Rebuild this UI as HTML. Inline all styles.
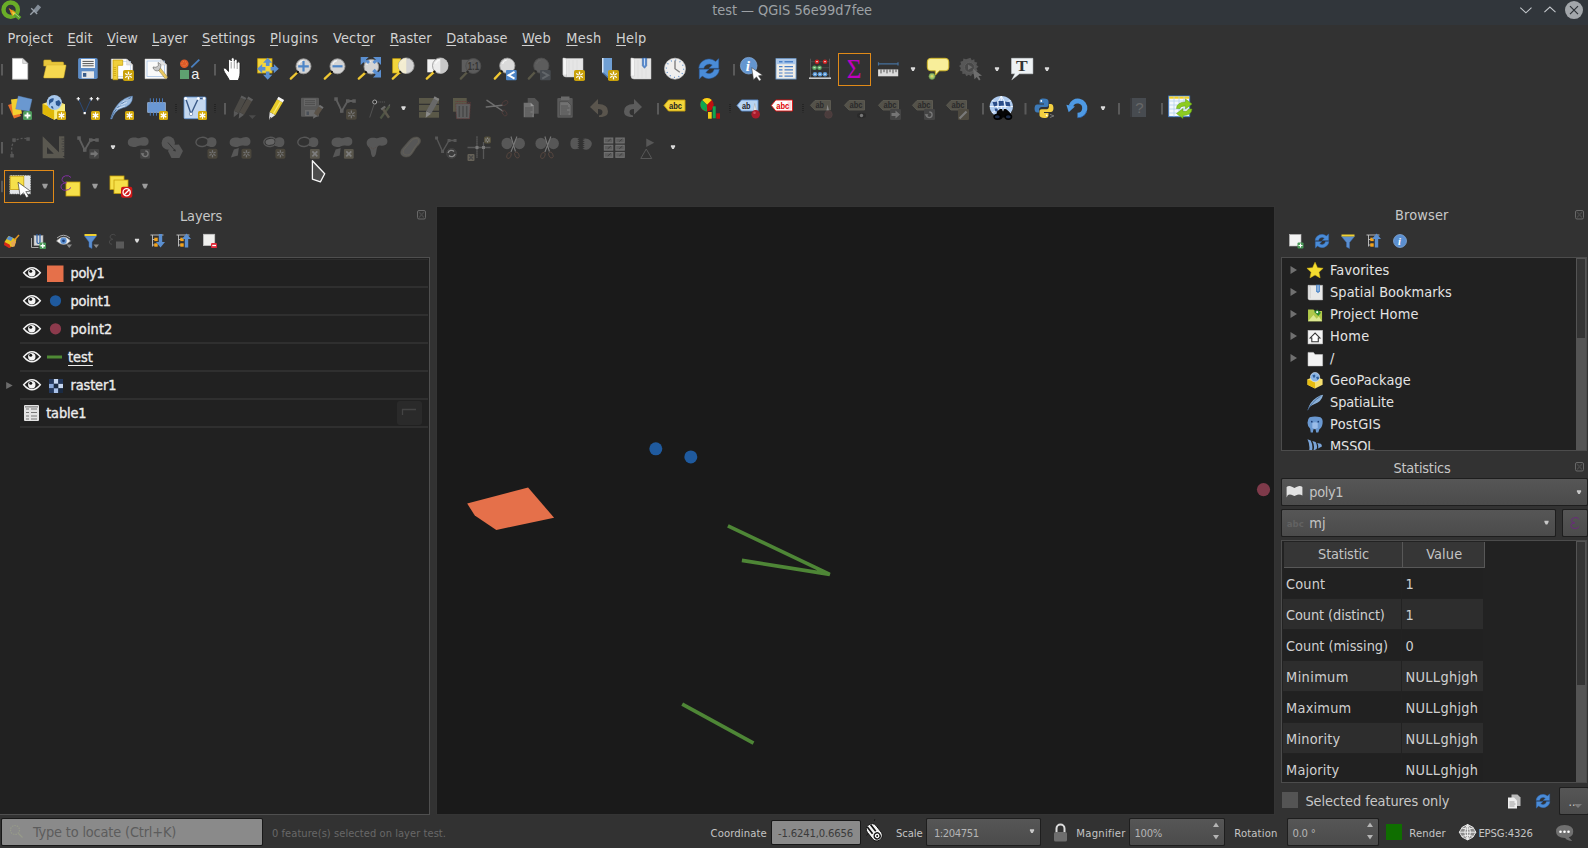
<!DOCTYPE html><html><head><meta charset="utf-8"><title>test — QGIS 56e99d7fee</title><style>
*{box-sizing:border-box;margin:0;padding:0}
html,body{width:1588px;height:848px;overflow:hidden;background:#323232}
body{position:relative;font-family:"DejaVu Sans Condensed","Liberation Sans","DejaVu Sans",sans-serif;font-size:14px;color:#d6d6d6}
.a{position:absolute}
.t{position:absolute;white-space:nowrap;line-height:1}
svg{position:absolute;overflow:visible}
u{text-decoration:underline;text-underline-offset:2px;text-decoration-thickness:1px}
</style></head><body>
<div class="a" style="left:0px;top:0px;width:1588px;height:25px;background:#31363b;"></div>
<div class="t" style="left:712.2px;top:2.72px;font-size:14.4px;color:#9da1a5;letter-spacing:-0.017px;">test — QGIS 56e99d7fee</div>
<div class="t" style="left:7.6px;top:30.72px;font-size:14.4px;color:#d2d2d2;letter-spacing:0.148px;">Pro<u>j</u>ect</div>
<div class="t" style="left:67.4px;top:30.72px;font-size:14.4px;color:#d2d2d2;letter-spacing:0.028px;"><u>E</u>dit</div>
<div class="t" style="left:107px;top:30.72px;font-size:14.4px;color:#d2d2d2;letter-spacing:0.047px;"><u>V</u>iew</div>
<div class="t" style="left:152px;top:30.72px;font-size:14.4px;color:#d2d2d2;letter-spacing:-0.083px;"><u>L</u>ayer</div>
<div class="t" style="left:202px;top:30.72px;font-size:14.4px;color:#d2d2d2;letter-spacing:0.032px;"><u>S</u>ettings</div>
<div class="t" style="left:270px;top:30.72px;font-size:14.4px;color:#d2d2d2;letter-spacing:0.284px;"><u>P</u>lugins</div>
<div class="t" style="left:333px;top:30.72px;font-size:14.4px;color:#d2d2d2;letter-spacing:0.190px;">Vect<u>o</u>r</div>
<div class="t" style="left:389.9px;top:30.72px;font-size:14.4px;color:#d2d2d2;letter-spacing:0.009px;"><u>R</u>aster</div>
<div class="t" style="left:446.3px;top:30.72px;font-size:14.4px;color:#d2d2d2;letter-spacing:-0.102px;"><u>D</u>atabase</div>
<div class="t" style="left:521.9px;top:30.72px;font-size:14.4px;color:#d2d2d2;letter-spacing:0.344px;"><u>W</u>eb</div>
<div class="t" style="left:566.2px;top:30.72px;font-size:14.4px;color:#d2d2d2;letter-spacing:0.296px;"><u>M</u>esh</div>
<div class="t" style="left:616.1px;top:30.72px;font-size:14.4px;color:#d2d2d2;letter-spacing:0.163px;"><u>H</u>elp</div>
<div class="a" style="left:838px;top:53px;width:33px;height:33px;background:transparent;border:1.300px solid #e08a18"></div>
<div class="a" style="left:4px;top:170px;width:50px;height:33px;background:transparent;border:1.300px solid #e08a18"></div>
<div class="a" style="left:436px;top:206px;width:839px;height:609px;background:#343434;"></div>
<div class="a" style="left:437px;top:207px;width:837px;height:607px;background:#1a1a1a;"></div>
<div class="t" style="left:180px;top:209.02px;font-size:14.4px;color:#c8c8c8;letter-spacing:-0.127px;">Layers</div>
<div class="a" style="left:0px;top:257px;width:430px;height:558px;background:#4f4f4f;"></div>
<div class="a" style="left:0px;top:258px;width:429px;height:556px;background:#212121;"></div>
<div class="a" style="left:20px;top:259px;width:408px;height:1px;background:#2c2c2c;"></div>
<div class="a" style="left:20px;top:286px;width:408px;height:2px;background:#2f2f2f;"></div>
<div class="a" style="left:20px;top:314px;width:408px;height:2px;background:#2f2f2f;"></div>
<div class="a" style="left:20px;top:342px;width:408px;height:2px;background:#2f2f2f;"></div>
<div class="a" style="left:20px;top:370px;width:408px;height:2px;background:#2f2f2f;"></div>
<div class="a" style="left:20px;top:398px;width:408px;height:2px;background:#2f2f2f;"></div>
<div class="a" style="left:20px;top:426px;width:408px;height:2px;background:#2f2f2f;"></div>
<div class="t" style="left:70.5px;top:265.82px;font-size:14.4px;color:#ececec;letter-spacing:-0.331px;font-weight:normal;-webkit-text-stroke:0.35px #ececec">poly1</div>
<div class="t" style="left:70.5px;top:293.82px;font-size:14.4px;color:#ececec;letter-spacing:-0.164px;font-weight:normal;-webkit-text-stroke:0.35px #ececec">point1</div>
<div class="t" style="left:70.5px;top:321.82px;font-size:14.4px;color:#ececec;letter-spacing:0.120px;font-weight:normal;-webkit-text-stroke:0.35px #ececec">point2</div>
<div class="t" style="left:68px;top:349.82px;font-size:14.4px;color:#ececec;letter-spacing:0.005px;font-weight:normal;-webkit-text-stroke:0.35px #ececec"><u style="text-underline-offset:2.500px">test</u></div>
<div class="t" style="left:70.5px;top:377.82px;font-size:14.4px;color:#ececec;letter-spacing:-0.118px;font-weight:normal;-webkit-text-stroke:0.35px #ececec">raster1</div>
<div class="t" style="left:46.2px;top:405.82px;font-size:14.4px;color:#ececec;letter-spacing:-0.143px;font-weight:normal;-webkit-text-stroke:0.35px #ececec">table1</div>
<div class="a" style="left:397px;top:401px;width:25px;height:24px;background:#2a2a2a;border-radius:3px"></div>
<div class="t" style="left:1395.1px;top:208.32px;font-size:14.4px;color:#c8c8c8;letter-spacing:0.148px;">Browser</div>
<div class="a" style="left:1281px;top:257px;width:306px;height:194px;background:#4c4c4c;"></div>
<div class="a" style="left:1282px;top:258px;width:304px;height:192px;background:#212121;"></div>
<div class="a" style="left:1576px;top:258px;width:10px;height:192px;background:#545454;"></div>
<div class="a" style="left:1577px;top:259px;width:8px;height:79px;background:#343434;"></div>
<div class="a" style="left:1282px;top:258px;width:294px;height:192px;overflow:hidden">
<div class="t" style="left:48.100px;top:5.12px;font-size:14.400px;color:#e4e4e4;letter-spacing:0.113px;">Favorites</div>
<div class="t" style="left:48.100px;top:27.12px;font-size:14.400px;color:#e4e4e4;letter-spacing:0.047px;">Spatial Bookmarks</div>
<div class="t" style="left:48.100px;top:49.12px;font-size:14.400px;color:#e4e4e4;letter-spacing:0.155px;">Project Home</div>
<div class="t" style="left:48.100px;top:71.12px;font-size:14.400px;color:#e4e4e4;letter-spacing:0.259px;">Home</div>
<div class="t" style="left:48.100px;top:93.12px;font-size:14.400px;color:#e4e4e4;">/</div>
<div class="t" style="left:48.100px;top:115.12px;font-size:14.400px;color:#e4e4e4;letter-spacing:0.135px;">GeoPackage</div>
<div class="t" style="left:48.100px;top:137.12px;font-size:14.400px;color:#e4e4e4;letter-spacing:-0.117px;">SpatiaLite</div>
<div class="t" style="left:48.100px;top:159.12px;font-size:14.400px;color:#e4e4e4;letter-spacing:0.252px;">PostGIS</div>
<div class="t" style="left:48.100px;top:181.12px;font-size:14.400px;color:#e4e4e4;letter-spacing:-0.149px;">MSSQL</div>
<svg style="left:0;top:0" width="294" height="192"><g transform="translate(24.400,3.6999999999999993) scale(1.080)"><path d="M8 .5l2.300 5 5.200.6-3.900 3.600 1.100 5.300-4.700-2.700-4.700 2.700 1.100-5.300-3.900-3.600 5.200-.6z" fill="#f4dc30" stroke="#d8b810" stroke-width="0.500"/></g><path d="M8.500 8l6.500 4-6.500 4z" fill="#707070"/><g transform="translate(24.400,25.7) scale(1.080)"><path d="M1.500 1.500h13.500v13.500h-12q-1.500 0-1.500-1.500z" fill="#e8e8e8" stroke="#bbb" stroke-width="0.500"/><path d="M1.500 1.500q2 0 2 2v10" fill="none" stroke="#c4c4c4" stroke-width="0.700"/><path d="M9 1h3.500v6l-1.750 1.800-1.750-1.800z" fill="#4e86c8"/><path d="M10.750 1.500v5.500" stroke="#fff" stroke-width="0.600"/></g><path d="M8.500 30l6.500 4-6.500 4z" fill="#707070"/><g transform="translate(24.400,47.7) scale(1.080)"><path d="M1.500 3.500h5l1.500 1.500h6.500v9.500h-13z" fill="#b0c84a"/><path d="M1.500 14.500l5-6 3 3.500 2-2 3 4.500z" fill="#dce890"/><path d="M7 5.500l3-2 3.500 3-2.500 3z" fill="#2a8a30"/><circle cx="10" cy="6" r="1" fill="#fff"/></g><path d="M8.500 52l6.500 4-6.500 4z" fill="#707070"/><g transform="translate(24.400,69.7) scale(1.080)"><rect x="1.500" y="2.500" width="13.500" height="12.500" fill="#f2f2f2" stroke="#ccc" stroke-width="0.500"/><path d="M8 5l-4.500 4.500h1.500v3.500h6v-3.500h1.500z" fill="#fff" stroke="#333" stroke-width="1"/></g><path d="M8.500 74l6.500 4-6.500 4z" fill="#707070"/><g transform="translate(24.400,91.7) scale(1.080)"><path d="M1.500 2.500h5l1.500 2h7v10.500h-13.500z" fill="#f2f2f2" stroke="#ccc" stroke-width="0.500"/></g><path d="M8.500 96l6.500 4-6.500 4z" fill="#707070"/><g transform="translate(24.400,113.7) scale(1.080)"><path d="M1 7l7-2.500 7 2.500v5l-7 3.500-7-3.500z" fill="#f6e070"/><path d="M1 7l7 3v5.500l-7-3.500z" fill="#e6bc10"/><circle cx="8" cy="5" r="4.300" fill="#8ab4e4"/><path d="M5.500 3.500l2-1 1 1.500-1.500 2zM9 5l2-.5 1 2-2 1z" fill="#2f5f9a"/><circle cx="8" cy="5" r="4.300" fill="none" stroke="#e8f0fc" stroke-width="0.500"/></g><g transform="translate(24.400,135.7) scale(1.080)"><path d="M1 15.500q2-8 8.500-12 3.500-2.200 6-2.500-.8 3.500-3 5.800-1.500 1.600-4.800 2.700-2.600.8-4.700 2.700z" fill="#8ab0d8"/><path d="M1.200 15.300q3.500-7.500 12-13" fill="none" stroke="#3a5f90" stroke-width="0.700"/></g><g transform="translate(24.400,157.7) scale(1.080)"><path d="M3 1.500q5-1.500 10 0 2.500 1.500 2 5.500t-3 5.500l-1 3h-2l-.5-3h-2l-.5 3h-2l-.5-3.500q-2.500-2-2.500-5.500t2-5z" fill="#6a98d0"/><path d="M5.500 6.500q2.500-1 5 0v5q-2.500 1.500-5 0z" fill="#9abce8"/><circle cx="5" cy="5.500" r=".8" fill="#1c3c74"/><circle cx="11" cy="5.500" r=".8" fill="#1c3c74"/></g><g transform="translate(24.400,179.7) scale(1.080)"><path d="M1 1.500q3 6 1 13l3-2q1.500-5-1-10zM5.500 3q2.500 4.500 1 9l3-1.500q1-3.500-1-6.500zM10 5q1.500 2.500.8 5l3.500-1.800q.2-1.500-1-2.500z" fill="#7aa4d8"/></g></svg>
</div>
<div class="t" style="left:1393.5px;top:460.62px;font-size:14.4px;color:#c8c8c8;letter-spacing:-0.212px;">Statistics</div>
<div class="a" style="left:1281px;top:478px;width:307px;height:28px;background:#1e1e1e;border-radius:1.500px"></div>
<div class="a" style="left:1282px;top:479px;width:305px;height:26px;background:linear-gradient(#565656,#4b4b4b);border-radius:1px"></div>
<div class="t" style="left:1309.3px;top:484.92px;font-size:14.4px;color:#c4c4c4;letter-spacing:-0.331px;">poly1</div>
<div class="a" style="left:1281px;top:509px;width:275px;height:28px;background:#1e1e1e;border-radius:1.500px"></div>
<div class="a" style="left:1282px;top:510px;width:273px;height:26px;background:linear-gradient(#565656,#4b4b4b);border-radius:1px"></div>
<div class="t" style="left:1286.8px;top:518.56px;font-size:9.5px;color:#626262;font-weight:bold">abc</div>
<div class="t" style="left:1309.3px;top:515.62px;font-size:14.4px;color:#c4c4c4;letter-spacing:-0.011px;">mj</div>
<div class="a" style="left:1562px;top:509px;width:26px;height:28px;background:#1e1e1e;border-radius:1.500px"></div>
<div class="a" style="left:1563px;top:510px;width:24px;height:26px;background:linear-gradient(#565656,#4b4b4b);border-radius:1px"></div>
<div class="a" style="left:1281px;top:540px;width:306px;height:243px;background:#4c4c4c;"></div>
<div class="a" style="left:1282px;top:541px;width:304px;height:241px;background:#222222;"></div>
<div class="a" style="left:1284px;top:542px;width:200px;height:25px;background:#363636;"></div>
<div class="a" style="left:1402px;top:542px;width:1px;height:25px;background:#585858;"></div>
<div class="a" style="left:1284px;top:567px;width:200px;height:1px;background:#585858;"></div>
<div class="a" style="left:1484px;top:542px;width:1px;height:26px;background:#585858;"></div>
<div class="t" style="left:1318.1px;top:546.82px;font-size:14.4px;color:#c4c4c4;letter-spacing:-0.174px;">Statistic</div>
<div class="t" style="left:1426.2px;top:546.82px;font-size:14.4px;color:#c4c4c4;letter-spacing:0.127px;">Value</div>
<div class="a" style="left:1282px;top:568px;width:294px;height:214px;overflow:hidden">
<div class="a" style="left:1px;top:0px;width:118px;height:30px;background:#212121"></div>
<div class="a" style="left:120px;top:0px;width:81px;height:30px;background:#212121"></div>
<div class="t" style="left:4.100px;top:8.62px;font-size:14.400px;color:#d0d0d0;letter-spacing:0.125px;">Count</div>
<div class="t" style="left:123.600px;top:8.62px;font-size:14.400px;color:#d0d0d0;">1</div>
<div class="a" style="left:1px;top:31px;width:118px;height:30px;background:#2d2d2d"></div>
<div class="a" style="left:120px;top:31px;width:81px;height:30px;background:#2d2d2d"></div>
<div class="t" style="left:4.100px;top:39.62px;font-size:14.400px;color:#d0d0d0;letter-spacing:-0.098px;">Count (distinct)</div>
<div class="t" style="left:123.600px;top:39.62px;font-size:14.400px;color:#d0d0d0;">1</div>
<div class="a" style="left:1px;top:62px;width:118px;height:30px;background:#212121"></div>
<div class="a" style="left:120px;top:62px;width:81px;height:30px;background:#212121"></div>
<div class="t" style="left:4.100px;top:70.62px;font-size:14.400px;color:#d0d0d0;letter-spacing:-0.031px;">Count (missing)</div>
<div class="t" style="left:123.600px;top:70.62px;font-size:14.400px;color:#d0d0d0;">0</div>
<div class="a" style="left:1px;top:93px;width:118px;height:30px;background:#2d2d2d"></div>
<div class="a" style="left:120px;top:93px;width:81px;height:30px;background:#2d2d2d"></div>
<div class="t" style="left:4.100px;top:101.62px;font-size:14.400px;color:#d0d0d0;letter-spacing:0.365px;">Minimum</div>
<div class="t" style="left:123.600px;top:101.62px;font-size:14.400px;color:#d0d0d0;letter-spacing:0.302px;">NULLghjgh</div>
<div class="a" style="left:1px;top:124px;width:118px;height:30px;background:#212121"></div>
<div class="a" style="left:120px;top:124px;width:81px;height:30px;background:#212121"></div>
<div class="t" style="left:4.100px;top:132.62px;font-size:14.400px;color:#d0d0d0;letter-spacing:0.223px;">Maximum</div>
<div class="t" style="left:123.600px;top:132.62px;font-size:14.400px;color:#d0d0d0;letter-spacing:0.302px;">NULLghjgh</div>
<div class="a" style="left:1px;top:155px;width:118px;height:30px;background:#2d2d2d"></div>
<div class="a" style="left:120px;top:155px;width:81px;height:30px;background:#2d2d2d"></div>
<div class="t" style="left:4.100px;top:163.62px;font-size:14.400px;color:#d0d0d0;letter-spacing:0.215px;">Minority</div>
<div class="t" style="left:123.600px;top:163.62px;font-size:14.400px;color:#d0d0d0;letter-spacing:0.302px;">NULLghjgh</div>
<div class="a" style="left:1px;top:186px;width:118px;height:30px;background:#212121"></div>
<div class="a" style="left:120px;top:186px;width:81px;height:30px;background:#212121"></div>
<div class="t" style="left:4.100px;top:194.62px;font-size:14.400px;color:#d0d0d0;letter-spacing:0.124px;">Majority</div>
<div class="t" style="left:123.600px;top:194.62px;font-size:14.400px;color:#d0d0d0;letter-spacing:0.302px;">NULLghjgh</div>
</div>
<div class="a" style="left:1576px;top:541px;width:10px;height:241px;background:#545454;"></div>
<div class="a" style="left:1577px;top:542px;width:8px;height:143px;background:#343434;"></div>
<div class="a" style="left:1282px;top:792px;width:16px;height:16px;background:#545454;"></div>
<div class="t" style="left:1305.4px;top:794.12px;font-size:14.4px;color:#c8c8c8;letter-spacing:-0.054px;">Selected features only</div>
<div class="a" style="left:1559px;top:787px;width:30px;height:28px;background:#1e1e1e;border-radius:1.500px"></div>
<div class="a" style="left:1560px;top:788px;width:28px;height:26px;background:linear-gradient(#565656,#4b4b4b);border-radius:1px"></div>
<div class="t" style="left:1568.5px;top:795.85px;font-size:12px;color:#c8c8c8;">...</div>
<div class="a" style="left:1px;top:818px;width:262px;height:28px;background:#181818;border-radius:2px"></div>
<div class="a" style="left:2px;top:819px;width:260px;height:26px;background:#8a8a8a;border-radius:1px"></div>
<div class="t" style="left:33px;top:824.82px;font-size:14.4px;color:#5c5c5c;letter-spacing:-0.162px;">Type to locate (Ctrl+K)</div>
<div class="t" style="left:272px;top:828.09px;font-size:11px;color:#686868;letter-spacing:0.065px;">0 feature(s) selected on layer test.</div>
<div class="t" style="left:710.6px;top:827.92px;font-size:11.2px;color:#c4c4c4;letter-spacing:0.118px;">Coordinate</div>
<div class="a" style="left:771px;top:820px;width:90px;height:25px;background:#181818;border-radius:2px"></div>
<div class="a" style="left:772px;top:821px;width:88px;height:23px;background:#8a8a8a;border-radius:1px"></div>
<div class="t" style="left:778.1px;top:827.92px;font-size:11.2px;color:#3a3a3a;letter-spacing:-0.166px;">-1.6241,0.6656</div>
<div class="t" style="left:896px;top:827.92px;font-size:11.2px;color:#c4c4c4;letter-spacing:-0.123px;">Scale</div>
<div class="a" style="left:926px;top:818px;width:115px;height:28px;background:#1e1e1e;border-radius:1.500px"></div>
<div class="a" style="left:927px;top:819px;width:113px;height:26px;background:linear-gradient(#565656,#4b4b4b);border-radius:1px"></div>
<div class="t" style="left:933.9px;top:827.92px;font-size:11.2px;color:#b4b4b4;letter-spacing:-0.433px;">1:204751</div>
<div class="t" style="left:1076.3px;top:827.92px;font-size:11.2px;color:#c4c4c4;letter-spacing:0.250px;">Magnifier</div>
<div class="a" style="left:1129px;top:818px;width:96px;height:28px;background:#1e1e1e;border-radius:1.500px"></div>
<div class="a" style="left:1130px;top:819px;width:94px;height:26px;background:linear-gradient(#565656,#4b4b4b);border-radius:1px"></div>
<div class="t" style="left:1134.5px;top:827.92px;font-size:11.2px;color:#b4b4b4;letter-spacing:-0.326px;">100%</div>
<div class="t" style="left:1234.3px;top:827.92px;font-size:11.2px;color:#c4c4c4;letter-spacing:0.140px;">Rotation</div>
<div class="a" style="left:1287px;top:818px;width:92px;height:28px;background:#1e1e1e;border-radius:1.500px"></div>
<div class="a" style="left:1288px;top:819px;width:90px;height:26px;background:linear-gradient(#565656,#4b4b4b);border-radius:1px"></div>
<div class="t" style="left:1292.5px;top:827.92px;font-size:11.2px;color:#b4b4b4;letter-spacing:-0.251px;">0.0 °</div>
<div class="a" style="left:1386px;top:824px;width:16px;height:16px;background:#0f6e00;"></div>
<div class="t" style="left:1409.3px;top:827.92px;font-size:11.2px;color:#c4c4c4;letter-spacing:0.112px;">Render</div>
<div class="t" style="left:1478.4px;top:827.92px;font-size:11.2px;color:#c4c4c4;letter-spacing:-0.154px;">EPSG:4326</div>
<svg style="left:0;top:0" width="1588" height="848"><rect x="1" y="64.0" width="2" height="11.500" fill="#5a5a5a"/>
<g transform="translate(8.0,56)"><path d="M4.5 2.4h10.200l5 5v15.800h-15.200z" fill="#fff" stroke="#c8c8c8" stroke-width="0.8"/><path d="M14.700 2.400v5h5z" fill="#e0e0e0" stroke="#aaa" stroke-width="0.6"/></g>
<g transform="translate(42.0,56)"><path d="M1.700 5q0-1.100 1.100-1.100h5.500q.8 0 1 1l.3 1.100h11q1.100 0 1.100 1.100v3h-20z" fill="#e8c63c" stroke="#c9a520" stroke-width="0.500"/><path d="M5.300 9h18.200q.7 0 .5.800l-2.200 11.500q-.2.700-1 .7h-18.300q-1 0-.8-.9l2.600-11.300q.2-.8 1-.8z" fill="#f6d84f" stroke="#d4b02c" stroke-width="0.500"/></g>
<g transform="translate(76.0,56)"><rect x="2.100" y="2" width="19.600" height="21" rx="1.8" fill="#5d8cc6"/><rect x="5" y="3" width="14" height="9" fill="#f4f4f4"/><path d="M6.5 5.4h11.2M6.5 7.6h11.2M6.5 9.8h11.2" stroke="#555" stroke-width="1"/><rect x="5.700" y="15.300" width="12.300" height="7" fill="#e6e6e6"/><rect x="7" y="17" width="3.300" height="3.800" fill="#3b5d8a"/></g>
<g transform="translate(110.0,56)"><path d="M1.300 3h15.400l6 6v13.700h-21.400z" fill="#fdfdfd" stroke="#ccc" stroke-width="0.500"/><rect x="3.500" y="5.500" width="17" height="15" fill="none" stroke="#b8d0ec" stroke-width="0.700"/><path d="M16.700 3v6h6z" fill="#e4e4e4" stroke="#bbb" stroke-width="0.400"/><path d="M3 4h9.700v5.300h-5v14.400h-4.700z" fill="#f0cf3a" stroke="#c8a10a" stroke-width="0.800"/><path d="M3.500 11.500h2.500M3.500 13.500h2.500M3.500 15.500h2.500M3.500 17.500h2.500M3.500 19.500h2.500" stroke="#c8a10a" stroke-width="0.700"/><g opacity="1"><rect x="13" y="14" width="11" height="11" rx="1.8" fill="#c9a10a"/><line x1="15.07" y1="17.52" x2="21.93" y2="21.48" stroke="#fff" stroke-width="1.1"/><line x1="21.93" y1="17.52" x2="15.07" y2="21.48" stroke="#fff" stroke-width="1.1"/><line x1="18.5" y1="15.54" x2="18.5" y2="23.46" stroke="#fff" stroke-width="1.3"/><circle cx="18.5" cy="19.5" r="1.1" fill="#c9a10a"/></g></g>
<g transform="translate(144.0,56)"><path d="M1 3h15.700l6 6v13.700h-21.700z" fill="#fafafa" stroke="#ccc" stroke-width="0.500"/><rect x="3" y="5" width="17.500" height="15.500" fill="none" stroke="#a8c4e6" stroke-width="0.800"/><path d="M16.700 3v6h6z" fill="#e4e4e4" stroke="#bbb" stroke-width="0.400"/><path d="M13.500 13l8 10 2.200-1.700-8-10.300z" fill="#e8c860" stroke="#8a7a4a" stroke-width="0.500"/><path d="M9 11a4 4 0 0 0 6.200 3.300l1.400-2.900a4 4 0 0 0-2.600-4.900l.5 3-2.500 1.800z" fill="#c8c8c8" stroke="#666" stroke-width="0.600"/></g>
<g transform="translate(178.0,56)"><circle cx="6.300" cy="7.700" r="4.300" fill="#dc5a2a"/><circle cx="6.300" cy="7.700" r="2.200" fill="none" stroke="#f08a40" stroke-width="0.900" stroke-dasharray="1 1"/><line x1="13.300" y1="11.300" x2="21.300" y2="3.700" stroke="#4a80c0" stroke-width="1.800"/><rect x="2" y="14" width="9" height="9" fill="#5ea070"/><text x="13.200" y="22.700" font-size="14.500" fill="#f0f0f0" font-family="Liberation Sans, sans-serif">a</text></g>
<rect x="214" y="64.0" width="2" height="11.500" fill="#5a5a5a"/>
<g transform="translate(221.0,56)"><path d="M8.500 24.500c-1.500-3.500-5-7.500-6-10.500-.6-1.800 1.400-2.600 2.600-1.300l2.400 2.800v-10.500c0-2 2.600-2 2.700 0v-1.600c.1-2.200 3-2.200 3.100 0v1.400c.2-2 2.800-1.900 2.900.1v2.200c.3-1.800 2.800-1.600 2.800.4v9.500c0 3.500-1.200 5-1.700 7.500z" fill="#fff" stroke="#1a1a1a" stroke-width="0.800"/><path d="M10.200 6v6.500M13.300 5v7.500M16.200 6v7" stroke="#777" stroke-width="0.700"/></g>
<g transform="translate(255.0,56)"><rect x="2.700" y="2.700" width="14.300" height="14.300" fill="#f3d53c" stroke="#c9a10a" stroke-width="0.8"/><path d="M12.700 1.800l4.600 5h-2.800v3.200h-3.600v-3.200h-2.800z" fill="#5b8fd0"/><path d="M12.700 23.800l4.600-5h-2.800v-3.200h-3.600v3.200h-2.800z" fill="#5b8fd0"/><path d="M23.800 12.700l-5-4.600v2.800h-3.200v3.600h3.200v2.800z" fill="#5b8fd0"/><path d="M2.200 12.700l5-4.600v2.800h3.200v3.600h-3.200v2.800z" fill="#5b8fd0"/></g>
<g transform="translate(289.0,56)"><line x1="8.77" y1="16.03" x2="1.800" y2="22.600" stroke="#f0c832" stroke-width="2.300" stroke-linecap="round"/><circle cx="14.5" cy="10.3" r="7.5" fill="#d4d4d4" stroke="#9a9a9a" stroke-width="0.900"/><path d="M9.85 8.43a5.25 5.25 0 0 1 4.12 -3.75" fill="none" stroke="#fff" stroke-width="1.200" opacity="0.700"/><circle cx="8.77" cy="16.03" r="1.250" fill="#111"/><path d="M14.500 5v10.600M9.200 10.300h10.600" stroke="#4e86c8" stroke-width="2.200"/></g>
<g transform="translate(323.0,56)"><line x1="8.77" y1="16.03" x2="1.800" y2="22.600" stroke="#f0c832" stroke-width="2.300" stroke-linecap="round"/><circle cx="14.5" cy="10.3" r="7.5" fill="#d4d4d4" stroke="#9a9a9a" stroke-width="0.900"/><path d="M9.85 8.43a5.25 5.25 0 0 1 4.12 -3.75" fill="none" stroke="#fff" stroke-width="1.200" opacity="0.700"/><circle cx="8.77" cy="16.03" r="1.250" fill="#111"/><path d="M9.500 10.300h10" stroke="#4e86c8" stroke-width="2.200"/></g>
<g transform="translate(357.0,56)"><path d="M3.700 1h8l-2.700 2.700 3.500 3.500-2.500 2.500-3.500-3.500-2.800 2.800z" fill="#5b8fd0"/><path d="M24 1v8l-2.700-2.700-3.500 3.500-2.500-2.500 3.500-3.500-2.800-2.800z" fill="#5b8fd0"/><line x1="8.71" y1="16.29" x2="1.800" y2="22.600" stroke="#f0c832" stroke-width="2.300" stroke-linecap="round"/><circle cx="14.3" cy="10.7" r="7.3" fill="#d4d4d4" stroke="#9a9a9a" stroke-width="0.900"/><path d="M9.77 8.88a5.11 5.11 0 0 1 4.02 -3.65" fill="none" stroke="#fff" stroke-width="1.200" opacity="0.700"/><circle cx="8.71" cy="16.29" r="1.250" fill="#111"/><path d="M24 21.500h-8l2.700-2.700-3.500-3.500 2.500-2.500 3.500 3.500 2.800-2.800z" fill="#5b8fd0"/><path d="M9.500 4.500l2.500 2.500M19 4.500l-2.500 2.500" stroke="#5b8fd0" stroke-width="3"/></g>
<g transform="translate(391.0,56)"><rect x="1.700" y="2.700" width="8" height="14.300" fill="#f3d53c" stroke="#c9a10a" stroke-width="0.700"/><line x1="9.36" y1="15.64" x2="1.800" y2="22.600" stroke="#f0c832" stroke-width="2.300" stroke-linecap="round"/><circle cx="15.3" cy="9.7" r="7.8" fill="#d4d4d4" stroke="#9a9a9a" stroke-width="0.900"/><path d="M10.46 7.75a5.46 5.46 0 0 1 4.29 -3.90" fill="none" stroke="#fff" stroke-width="1.200" opacity="0.700"/><circle cx="9.36" cy="15.64" r="1.250" fill="#111"/><path d="M15.300 1.900a7.800 7.800 0 0 0 0 15.600z" fill="#f6efd0" opacity="0.900"/></g>
<g transform="translate(425.0,56)"><rect x="2.300" y="3.300" width="8" height="13" fill="#f2f2f2"/><line x1="9.36" y1="15.64" x2="1.800" y2="22.600" stroke="#f0c832" stroke-width="2.300" stroke-linecap="round"/><circle cx="15.3" cy="9.7" r="7.8" fill="#ececec" stroke="#9a9a9a" stroke-width="0.900"/><path d="M10.46 7.75a5.46 5.46 0 0 1 4.29 -3.90" fill="none" stroke="#fff" stroke-width="1.200" opacity="0.700"/><circle cx="9.36" cy="15.64" r="1.250" fill="#111"/><path d="M15.300 1.900a7.800 7.800 0 0 1 0 15.600z" fill="#c8c8c8"/></g>
<g transform="translate(459.0,56)"><rect x="2.700" y="3.700" width="8" height="12.300" fill="#5e5e5e"/><line x1="8.57" y1="15.73" x2="1.800" y2="22.600" stroke="#5a5848" stroke-width="2.300" stroke-linecap="round"/><circle cx="14.3" cy="10" r="7.5" fill="#5c5c5c" stroke="#4e4e4e" stroke-width="0.900"/><path d="M9.65 8.12a5.25 5.25 0 0 1 4.12 -3.75" fill="none" stroke="#666" stroke-width="1.200" opacity="0.700"/><circle cx="8.57" cy="15.73" r="1.250" fill="#2a2a2a"/><text x="8.800" y="13.800" font-size="11" font-weight="bold" fill="#333" font-family="Liberation Sans, sans-serif" textLength="11.200" lengthAdjust="spacingAndGlyphs">1:1</text></g>
<g transform="translate(493.0,56)"><line x1="8.50" y1="15.50" x2="1.800" y2="22.600" stroke="#f0c832" stroke-width="2.300" stroke-linecap="round"/><circle cx="14.3" cy="9.7" r="7.6" fill="#dadada" stroke="#9a9a9a" stroke-width="0.900"/><path d="M9.59 7.80a5.32 5.32 0 0 1 4.18 -3.80" fill="none" stroke="#fff" stroke-width="1.200" opacity="0.700"/><circle cx="8.50" cy="15.50" r="1.250" fill="#111"/><rect x="13" y="14" width="10.700" height="10.300" rx="1" fill="#4e86c8"/><path d="M21.500 15.800l-6 3.400 6 3.400" fill="none" stroke="#fff" stroke-width="1.900"/></g>
<g transform="translate(527.0,56)"><line x1="8.50" y1="15.50" x2="1.800" y2="22.600" stroke="#5a5848" stroke-width="2.300" stroke-linecap="round"/><circle cx="14.3" cy="9.7" r="7.6" fill="#5c5c5c" stroke="#4e4e4e" stroke-width="0.900"/><path d="M9.59 7.80a5.32 5.32 0 0 1 4.18 -3.80" fill="none" stroke="#666" stroke-width="1.200" opacity="0.700"/><circle cx="8.50" cy="15.50" r="1.250" fill="#2a2a2a"/><rect x="13" y="14" width="10.700" height="10.300" rx="1" fill="#474b50"/><path d="M15.200 15.800l6 3.400-6 3.400" fill="none" stroke="#62666a" stroke-width="1.900"/></g>
<g transform="translate(561.0,56)"><path d="M2 2.500h20v18.500h-17q-3 0-3-3z" fill="#e6e6e6" stroke="#c4c4c4" stroke-width="0.500"/><path d="M2 2q3.500-.5 3.500 2.500v14.500h-3.500z" fill="#f6f6f6" stroke="#c8c8c8" stroke-width="0.500"/><path d="M5.500 18.500v2.500" stroke="#c0c0c0" stroke-width="0.700"/><path d="M8 4v16M12 4v16M16 4v10" stroke="#dcdcdc" stroke-width="0.800"/><g opacity="1"><rect x="13" y="14" width="11" height="11" rx="1.8" fill="#c9a10a"/><line x1="15.07" y1="17.52" x2="21.93" y2="21.48" stroke="#fff" stroke-width="1.1"/><line x1="21.93" y1="17.52" x2="15.07" y2="21.48" stroke="#fff" stroke-width="1.1"/><line x1="18.5" y1="15.54" x2="18.5" y2="23.46" stroke="#fff" stroke-width="1.3"/><circle cx="18.5" cy="19.5" r="1.1" fill="#c9a10a"/></g></g>
<g transform="translate(595.0,56)"><path d="M7 2h10v20l-3.500 .7-6.500-6.200z" fill="#6f9fd4"/><path d="M7 2h1.500v15.500l-1.500-1z" fill="#d8e6f6"/><path d="M7 16.500l6.500 6.200v-1.500l-5-4.700z" fill="#3f6aa0"/><g opacity="1"><rect x="13" y="14" width="11" height="11" rx="1.8" fill="#c9a10a"/><line x1="15.07" y1="17.52" x2="21.93" y2="21.48" stroke="#fff" stroke-width="1.1"/><line x1="21.93" y1="17.52" x2="15.07" y2="21.48" stroke="#fff" stroke-width="1.1"/><line x1="18.5" y1="15.54" x2="18.5" y2="23.46" stroke="#fff" stroke-width="1.3"/><circle cx="18.5" cy="19.5" r="1.1" fill="#c9a10a"/></g></g>
<g transform="translate(629.0,56)"><path d="M2 2.500h20v20.500h-17q-3 0-3-3z" fill="#e6e6e6" stroke="#c4c4c4" stroke-width="0.500"/><path d="M2 2q3.500-.5 3.500 2.500v15.500h-3.500z" fill="#f6f6f6" stroke="#c8c8c8" stroke-width="0.500"/><path d="M9 4v18M13 12v10M17 12v10" stroke="#dcdcdc" stroke-width="0.800"/><path d="M13.300 2h4.400v7.800l-2.200 2.500-2.200-2.500z" fill="#5a8cd0" stroke="#2f5a94" stroke-width="0.500"/><path d="M15.500 2.500v7" stroke="#d8e6f6" stroke-width="0.900"/></g>
<g transform="translate(663.0,56)"><circle cx="12" cy="12.700" r="10.500" fill="#f0efee" stroke="#d0d0d0" stroke-width="0.700"/><circle cx="12" cy="12.700" r="8.600" fill="none" stroke="#4e86c8" stroke-width="1.200" stroke-dasharray="1 3.503"/><path d="M12 4.500v8.200l4.800 3.500" fill="none" stroke="#808080" stroke-width="1.400"/></g>
<g transform="translate(697.0,56)"><g transform="translate(0,.8)"><path d="M1.700 11.500A10.300 10.300 0 0 1 18.700 4.800l3-3v9.700h-9.700l3.300-3.300a5.600 5.600 0 0 0-8.600 3.300z" fill="#4a8cd8" stroke="#2a60a8" stroke-width="0.500"/><path d="M22.300 12.500a10.300 10.300 0 0 1-17 6.700l-3 3v-9.700h9.700l-3.300 3.300a5.600 5.600 0 0 0 8.600-3.300z" fill="#4a8cd8" stroke="#2a60a8" stroke-width="0.500"/></g></g>
<rect x="733" y="64.0" width="2" height="11.500" fill="#5a5a5a"/>
<g transform="translate(740.0,56)"><circle cx="8.700" cy="9.700" r="8.300" fill="#6496d0" stroke="#8ab0de" stroke-width="0.700"/><text x="5.800" y="15.300" font-size="15" font-style="italic" font-weight="bold" fill="#fff" font-family="Liberation Serif, serif">i</text><path d="M11.700 11.700l11 7.600-4.200.5 2.700 4-2 1.300-2.700-4.200-3 2.800z" fill="#fff" stroke="#333" stroke-width="0.500"/></g>
<g transform="translate(774.0,56)"><rect x="2" y="2.700" width="20" height="20.300" fill="#f0ede6" stroke="#6f9fd4" stroke-width="0.900"/><rect x="2.500" y="3.200" width="19" height="5" fill="#a8c6ea"/><path d="M5 5.700h3.500M10.500 5.700h8.500" stroke="#4a80c8" stroke-width="1.600"/><path d="M5 10.700h3.500M10.500 10.700h8.500M5 13.900h3.500M10.500 13.900h8.500M5 17h3.500M10.500 17h8.500M5 20.100h3.500M10.500 20.100h8.500" stroke="#4a80c8" stroke-width="1.200"/></g>
<g transform="translate(808.0,56)"><g transform="translate(0,.7)"><path d="M2.500 2v19.500M21.500 2v19.500" stroke="#555" stroke-width="1"/><path d="M1 21.500h22" stroke="#ccc" stroke-width="1.600"/><path d="M2.500 5h19M2.500 11h19M2.500 17.500h19" stroke="#555" stroke-width="0.600"/><circle cx="9" cy="5" r="2.300" fill="#d02020"/><circle cx="17" cy="5" r="2.300" fill="#d02020"/><circle cx="6.500" cy="11" r="2.300" fill="#58a860"/><circle cx="11.500" cy="11" r="2.300" fill="#58a860"/><circle cx="7" cy="17.500" r="2.300" fill="#5b9ad8"/><circle cx="12" cy="17.500" r="2.300" fill="#5b9ad8"/><circle cx="17" cy="17.500" r="2.300" fill="#5b9ad8"/><path d="M8 5h2M16 5h2M5.500 11h2M10.500 11h2M6 17.500h2M11 17.500h2M16 17.500h2" stroke="#fff" stroke-width="0.800"/></g></g>
<g transform="translate(842.0,56)"><text x="4.700" y="22.300" font-size="28" fill="#c000c0" font-family="Liberation Serif, serif" textLength="14.700" lengthAdjust="spacingAndGlyphs">Σ</text></g>
<g transform="translate(876.0,56)"><path d="M2.500 7.900h19.500M2.500 6.200v3.400M22 6.200v3.400" stroke="#46709c" stroke-width="1.200" fill="none"/><rect x="2.100" y="13.400" width="20.100" height="6.900" fill="#dcdcdc"/><path d="M5 13.400v4M8 13.400v2.800M11 13.400v4M14 13.400v2.800M17 13.400v4M20 13.400v2.800" stroke="#555" stroke-width="1"/></g>
<path d="M910.9 67.3h4.200v1.200l-1.300 2.400h-1.600l-1.300-2.400z" fill="#dadada"/>
<g transform="translate(925.5,56)"><path d="M5.300 2.300h14.500q3.500 0 3.500 3.500v5.500q0 3.500-3.500 3.500h-6l-4 4.500v-4.500h-4.500q-3.500 0-3.500-3.500v-5.500q0-3.500 3.500-3.500z" fill="#f8ee9a" stroke="#d4b820" stroke-width="0.900"/><circle cx="6.500" cy="20.300" r="3.100" fill="#9ac070" stroke="#5a8a40" stroke-width="0.600"/><circle cx="6.500" cy="20.300" r="1.300" fill="#d8d860"/></g>
<g transform="translate(959.5,56)"><g transform="translate(.5,.8)"><path d="M10.500 1l1.200 2.400 2.600-.9.300 2.700 2.700.5-1 2.500 2.200 1.600-2 1.900 1.200 2.400-2.600.8-.1 2.700-2.700-.4-1.400 2.300-2.200-1.600-2.300 1.500-1.300-2.400-2.700.3-.1-2.700-2.500-1 1.100-2.500-1.900-1.900 2.100-1.700-.8-2.600 2.700-.6.400-2.700 2.600.8z" fill="#575757"/><circle cx="9.500" cy="10.500" r="5" fill="#484848" stroke="#666" stroke-width="0.600"/><path d="M8 7.800l4.500 2.700-4.500 2.700z" fill="#6a6a6a"/><path d="M13 12l9 7-3.500.3 2 3.500-1.500 1-2.200-3.600-2.300 2.300z" fill="#6e6e6e"/></g></g>
<path d="M994.9 67.3h4.200v1.200l-1.300 2.400h-1.600l-1.300-2.400z" fill="#dadada"/>
<g transform="translate(1010.0,56)"><path d="M1.500 2.300h21.400v15.500h-13.400l-7.700 6 3.200-6h-3.500z" fill="#eef2f4" stroke="#cfd4d8" stroke-width="0.500"/><text x="6" y="14.800" font-size="14" font-weight="bold" fill="#333" font-family="Liberation Serif, serif" textLength="11.700" lengthAdjust="spacingAndGlyphs">T</text></g>
<path d="M1044.9 67.3h4.200v1.200l-1.300 2.400h-1.600l-1.300-2.400z" fill="#dadada"/>
<rect x="1" y="103.0" width="2" height="11.500" fill="#5a5a5a"/>
<g transform="translate(8.0,96)"><path d="M0 9l6-2 7 13-7 2.500z" fill="#e8702a"/><path d="M3 3.500l8-1 3 15-9 2z" fill="#f3d030"/><path d="M10.300 0l13.700 3.300-2.700 12-13.600-2.300z" fill="#6a98d0" stroke="#5a88c0" stroke-width="0.400"/><rect x="15" y="15" width="9" height="9" rx="1.500" fill="#4e9a5c"/><path d="M19.500 16.500v6M16.500 19.500h6" stroke="#fff" stroke-width="1.800"/></g>
<g transform="translate(42.0,96)"><path d="M.7 7.700l11.600-4 10.700 4.600v9.700l-10.700 5.700-11.600-6z" fill="#f6e070"/><path d="M.7 7.700l11.600 5.300v10.700l-11.600-6z" fill="#e0b808"/><path d="M12.300 13l10.700-4.700v9.700l-10.700 5.700z" fill="#faee80"/><circle cx="12.300" cy="6.500" r="7.600" fill="#a8c8ec"/><path d="M12.300 14.100a7.600 7.600 0 0 0 6.500-3.600l-6.500 2.500-6.500-2.800a7.600 7.600 0 0 0 6.500 3.900z" fill="#f6e070" opacity="0"/><path d="M7 4q2.500-2.500 5-1.500l-1 3-2.500 1.500-1.500 2.500zM13.500 5.500l3.500-1.500 2 3-2 3.500-3-1.500zM9 10l2 .5.500 2.500-2-1z" fill="#2a5590"/><rect x="15" y="15" width="9" height="9" rx="1.500" fill="#d4aa0a"/><line x1="19.50" y1="16.26" x2="19.50" y2="22.74" stroke="#fff" stroke-width="1.200"/><line x1="16.69" y1="17.88" x2="22.31" y2="21.12" stroke="#fff" stroke-width="1.200"/><line x1="22.31" y1="17.88" x2="16.69" y2="21.12" stroke="#fff" stroke-width="1.200"/></g>
<g transform="translate(76.0,96)"><path d="M2.300 2.700l6.400 14.300 6.600-14.300" fill="none" stroke="#2c4a78" stroke-width="1"/><path d="M2.300 1v3.400M.6 2.700h3.400M15.300 1v3.400M13.600 2.700h3.400M21.700 1v3.400M20 2.700h3.400" stroke="#fff" stroke-width="1.100"/><rect x="7.600" y="16" width="2.200" height="2.200" fill="#fff"/><rect x="15" y="15" width="9" height="9" rx="1.500" fill="#d4aa0a"/><line x1="19.50" y1="16.26" x2="19.50" y2="22.74" stroke="#fff" stroke-width="1.200"/><line x1="16.69" y1="17.88" x2="22.31" y2="21.12" stroke="#fff" stroke-width="1.200"/><line x1="22.31" y1="17.88" x2="16.69" y2="21.12" stroke="#fff" stroke-width="1.200"/></g>
<g transform="translate(110.0,96)"><path d="M.5 23q2-9 8-15.500 6-6.500 14-7.500.5 5-3 8.500-2.500 2.500-7 3.500-4.500 1.200-7 4.500-2.500 3-3.500 6.500z" fill="#9cbce0" stroke="#4a70a0" stroke-width="0.500"/><path d="M.7 22.800q5-13 20.500-21.500" fill="none" stroke="#3a5f90" stroke-width="0.800"/><path d="M6 13l9-3M9 9.500l8-3M12.500 6l6-2.500" stroke="#e4eefa" stroke-width="0.700"/><rect x="15" y="15" width="9" height="9" rx="1.500" fill="#d4aa0a"/><line x1="19.50" y1="16.26" x2="19.50" y2="22.74" stroke="#fff" stroke-width="1.200"/><line x1="16.69" y1="17.88" x2="22.31" y2="21.12" stroke="#fff" stroke-width="1.200"/><line x1="22.31" y1="17.88" x2="16.69" y2="21.12" stroke="#fff" stroke-width="1.200"/></g>
<g transform="translate(144.0,96)"><rect x="3.700" y="6.700" width="17.600" height="9.600" fill="#6a98d4" stroke="#a8c4e8" stroke-width="0.700"/><path d="M6.300 2.300v4.400M9.500 2.300v4.400M12.500 2.300v4.400M15.500 2.300v4.400M18.500 2.300v4.400M6.300 16.300v3.400M9.500 16.300v3.400M12.500 16.300v3.400" stroke="#4a80c8" stroke-width="0.900"/><rect x="15" y="15" width="9" height="9" rx="1.500" fill="#d4aa0a"/><line x1="19.50" y1="16.26" x2="19.50" y2="22.74" stroke="#fff" stroke-width="1.200"/><line x1="16.69" y1="17.88" x2="22.31" y2="21.12" stroke="#fff" stroke-width="1.200"/><line x1="22.31" y1="17.88" x2="16.69" y2="21.12" stroke="#fff" stroke-width="1.200"/></g>
<path d="M176 104.0v8.500" stroke="#242424" stroke-width="2" stroke-dasharray="1 1"/>
<g transform="translate(183.0,96)"><rect x="1" y="1" width="22" height="21.700" rx="1" fill="#c4d8f0" stroke="#5b8fd0" stroke-width="0.800"/><path d="M2.700 2.500l5.300 15.500 7.300-15.500 5.700 0" fill="none" stroke="#3a5a88" stroke-width="1.400"/><circle cx="2.700" cy="2.500" r="1.500" fill="#fff"/><circle cx="15.300" cy="2.500" r="1.500" fill="#fff"/><circle cx="21" cy="2.500" r="1.300" fill="#fff"/><circle cx="8" cy="18" r="1.700" fill="#fff" stroke="#3a5a88" stroke-width="0.500"/><rect x="15" y="15" width="9" height="9" rx="1.500" fill="#d4aa0a"/><line x1="19.50" y1="16.26" x2="19.50" y2="22.74" stroke="#fff" stroke-width="1.200"/><line x1="16.69" y1="17.88" x2="22.31" y2="21.12" stroke="#fff" stroke-width="1.200"/><line x1="22.31" y1="17.88" x2="16.69" y2="21.12" stroke="#fff" stroke-width="1.200"/></g>
<path d="M215 104.0v8.500" stroke="#242424" stroke-width="2" stroke-dasharray="1 1"/>
<rect x="224" y="103.0" width="2" height="11.500" fill="#5a5a5a"/>
<g transform="translate(231.0,96)"><polygon points="2.7,21.3 7.9,17.1 2.9,14.7" fill="#585858"/><polygon points="7.9,17.1 14.4,4.1 9.4,1.7 2.9,14.7" fill="#4c4a46"/><polygon points="14.4,4.1 15.5,1.9 10.5,-0.5 9.4,1.7" fill="#5c5c5c"/><polygon points="7.7,22.7 13.1,18.8 8.4,16.1" fill="#5c5c5c"/><polygon points="13.1,18.8 20.8,5.5 16.1,2.8 8.4,16.1" fill="#4e4a44"/><polygon points="20.8,5.5 22.1,3.4 17.3,0.6 16.1,2.8" fill="#606060"/><path d="M17.700 19.300h7.300l-3.650 3.700z" fill="#4a4a4a"/></g>
<g transform="translate(265.0,96)"><polygon points="4.0,23.7 10.4,19.1 4.7,15.9" fill="#e4e4e4"/><polygon points="10.4,19.1 17.7,6.5 12.0,3.2 4.7,15.9" fill="#e8cc28"/><polygon points="17.7,6.5 19.1,3.9 13.5,0.7 12.0,3.2" fill="#f8f8f8"/><path d="M4 23.700l1.300-2.600 1.300.8z" fill="#333"/><path d="M8.500 17.500l7-12" stroke="#f8e878" stroke-width="1.200"/></g>
<g transform="translate(299.0,96)"><rect x="2" y="1.700" width="18" height="19" rx="1" fill="#585858"/><rect x="5" y="2.700" width="12" height="7.500" fill="#666"/><path d="M6 4.700h10M6 6.700h10M6 8.500h10" stroke="#4a4a4a" stroke-width="0.800"/><rect x="6" y="14" width="10" height="6" fill="#6a6a6a"/><rect x="7.500" y="15.500" width="2.500" height="3.500" fill="#4a5058"/><polygon points="14.0,22.7 18.7,19.9 14.9,17.3" fill="#6a6a6a"/><polygon points="18.7,19.9 23.4,12.9 19.7,10.4 14.9,17.3" fill="#5a5248"/><polygon points="23.4,12.9 24.6,11.3 20.8,8.7 19.7,10.4" fill="#727272"/></g>
<g transform="translate(333.0,96)"><path d="M3 3l5.700 12 6-10h6.300" fill="none" stroke="#5e5e5e" stroke-width="1.800"/><rect x="1.300" y="1.300" width="3.500" height="3.500" fill="#5e5e5e"/><rect x="7" y="13.300" width="3.500" height="3.500" fill="#5e5e5e"/><rect x="13" y="3.300" width="3.500" height="3.500" fill="#5e5e5e"/><rect x="19.300" y="3.300" width="3.500" height="3.500" fill="#5e5e5e"/><g opacity="1"><rect x="13" y="13" width="10.7" height="10.7" rx="1.8" fill="#4a463c"/><line x1="15.01" y1="16.42" x2="21.69" y2="20.28" stroke="#747474" stroke-width="1.1"/><line x1="21.69" y1="16.42" x2="15.01" y2="20.28" stroke="#747474" stroke-width="1.1"/><line x1="18.35" y1="14.50" x2="18.35" y2="22.20" stroke="#747474" stroke-width="1.3"/><circle cx="18.35" cy="18.35" r="1.1" fill="#4a463c"/></g></g>
<g transform="translate(367.0,96)"><circle cx="7.700" cy="6" r="2" fill="#2a2a2a" stroke="#b0b0b0" stroke-width="0.900"/><path d="M10.500 6h7.500" stroke="#5a5a5a" stroke-width="0.900" stroke-dasharray="1.300 .8"/><path d="M7 8.500l-4.300 13" stroke="#5a5a5a" stroke-width="0.800"/><path d="M13.500 22.500l9-12.500" stroke="#4e5444" stroke-width="2.200"/><path d="M22 10l.8-1.500" stroke="#666" stroke-width="1.200"/><path d="M14 12.500l3.500-2.500 1.500 1.500-1.500 1.500 5.500 8-2 1.500-5.500-8z" fill="#5c584c"/><path d="M13.500 12.800l4-3 1.200 1.200-3.800 3.200z" fill="#6a6a6a"/></g>
<path d="M401.4 106.3h4.200v1.200l-1.300 2.400h-1.600l-1.300-2.400z" fill="#dadada"/>
<g transform="translate(417.0,96)"><rect x="2" y="2" width="20" height="5.700" fill="#5a5848"/><rect x="2" y="9" width="20" height="5.700" fill="#5a5848"/><rect x="2" y="16" width="20" height="5.700" fill="#5a5848"/><polygon points="8.7,21.7 14.1,17.8 9.3,15.1" fill="#8a8a8a"/><polygon points="14.1,17.8 21.2,5.2 16.4,2.5 9.3,15.1" fill="#686868"/><polygon points="21.2,5.2 22.4,3.1 17.6,0.3 16.4,2.5" fill="#808080"/></g>
<g transform="translate(451.0,96)"><rect x="2" y="2" width="13.700" height="13.700" fill="#5a5848"/><path d="M4.700 7.700h14.600l-.8 15h-13z" fill="#5e5e5e" stroke="#6a3838" stroke-width="0.700" stroke-dasharray="1 .6"/><path d="M4.500 5.500h11l2 1h2" fill="none" stroke="#6a3c3c" stroke-width="0.900" stroke-dasharray="1 .6"/><path d="M8.300 10v11M12 10v11M15.700 10v11" stroke="#484848" stroke-width="1.500"/></g>
<g transform="translate(485.0,96)"><path d="M2 4.300l15.700 10.700M1.300 11l15.700-1.700" stroke="#6e6e6e" stroke-width="1.500" stroke-linecap="round"/><ellipse cx="20" cy="7" rx="3.200" ry="2" fill="none" stroke="#523c3a" stroke-width="0.800" transform="rotate(-35 20 7)"/><ellipse cx="19.500" cy="17" rx="3.200" ry="2" fill="none" stroke="#523c3a" stroke-width="0.800" transform="rotate(55 19.500 17)"/></g>
<g transform="translate(519.0,96)"><path d="M8.700 2h7l4 4v11.700h-11z" fill="#555"/><path d="M4.700 6.700h7l3.300 3.300v11.300h-10.300z" fill="#727272"/><path d="M11.700 6.700v3.300h3.300z" fill="#9a9a9a"/><path d="M6 12h7.500M6 14h7.500M6 16h5.500M6 18h7.500M6 20h7" stroke="#505050" stroke-width="0.900"/></g>
<g transform="translate(553.0,96)"><rect x="4.300" y="2" width="15.400" height="19.700" rx="1" fill="#5a5a5a"/><rect x="8" y=".5" width="8.500" height="3.500" fill="#6a6a6a"/><path d="M6.700 5.700h8l3.300 3.300v10.700h-11.300z" fill="#727272" stroke="#3c3c3c" stroke-width="0.500"/><path d="M8 10h7M8 12h8.500M8 14h6M8 16h8.500M8 18h7.500" stroke="#505050" stroke-width="0.900"/></g>
<g transform="translate(587.0,96)"><path d="M3 11l8-8v5q10 0 10 7.500 0 4.500-6 5.500h-3v-1.500q3.500-.5 3.500-3.500 0-3-4.500-3v5.500z" fill="#5a554d"/></g>
<g transform="translate(621.0,96)"><path d="M21 11l-8-8v5q-10 0-10 7.500 0 4.500 6 5.500h3v-1.500q-3.500-.5-3.500-3.500 0-3 4.500-3v5.500z" fill="#5c5c5c"/></g>
<rect x="657" y="103.0" width="2" height="11.500" fill="#5a5a5a"/>
<g transform="translate(663.0,96)"><path d="M1 9.5l4.500-5.5h16.5v11h-16.5z" fill="#f3d53c" stroke="#c9a10a" stroke-width="0.900"/><text x="6" y="12.5" font-size="9.500" font-weight="bold" fill="#222" font-family="Liberation Sans, sans-serif" textLength="13" lengthAdjust="spacingAndGlyphs">abc</text></g>
<g transform="translate(697.5,96)"><circle cx="9.500" cy="8.700" r="6.700" fill="#c01010"/><path d="M9.500 8.700l-4.740-4.740a6.700 6.700 0 0 1 9.480 0z" fill="#f4d818"/><path d="M9.500 8.700l-4.740-4.740a6.700 6.700 0 0 0 2.400 11z" fill="#10a850"/><path d="M9.500 8.700v6.700a6.700 6.700 0 0 1-2.340-.44z" fill="#10a850"/><rect x="10.500" y="16" width="3.700" height="6.700" fill="#f4c818"/><rect x="15.200" y="10.300" width="3" height="12" fill="#10a850"/><rect x="18.800" y="17.300" width="3.700" height="5.400" fill="#b81010"/></g>
<path d="M730 104.0v8.500" stroke="#242424" stroke-width="2" stroke-dasharray="1 1"/>
<g transform="translate(736.0,96)"><path d="M1 9.5l4.500-5.5h16.5v11h-16.5z" fill="#b8d4f2" stroke="#5b8fd0" stroke-width="0.900"/><text x="6" y="12.5" font-size="9.500" font-weight="bold" fill="#222" font-family="Liberation Sans, sans-serif" textLength="8.5" lengthAdjust="spacingAndGlyphs">ab</text><path d="M18.700 7.500l1.700 7h-2.800z" fill="#f0f0f0" stroke="#999" stroke-width="0.400"/><circle cx="19.700" cy="18.300" r="4.300" fill="#a81c2c"/><circle cx="18.500" cy="16.800" r="1.300" fill="#d05060"/></g>
<g transform="translate(770.0,96)"><path d="M1.3 9.5l4.500-5.5h16.7v11h-16.7z" fill="#fff" stroke="#e01010" stroke-width="0.900"/><text x="6.3" y="12.5" font-size="9.500" font-weight="bold" fill="#d00000" font-family="Liberation Sans, sans-serif" textLength="13" lengthAdjust="spacingAndGlyphs">abc</text><rect x="6" y="5.500" width="15.500" height="8" fill="#fff"/><rect x="17.500" y="5.500" width="4" height="8" fill="#f8d8d8"/><text x="6.300" y="12.500" font-size="9.500" font-weight="bold" fill="#e00000" font-family="Liberation Sans, sans-serif" textLength="13" lengthAdjust="spacingAndGlyphs">abc</text></g>
<path d="M803 104.0v8.500" stroke="#242424" stroke-width="2" stroke-dasharray="1 1"/>
<g transform="translate(809.0,96)"><path d="M1.5 9.25l4.500-4.75h15.5v9.5h-15.5z" fill="#54524a" stroke="#5e5c52" stroke-width="0.900"/><text x="6.5" y="12.25" font-size="9.500" font-weight="bold" fill="#2a2a2a" font-family="Liberation Sans, sans-serif" textLength="8.5" lengthAdjust="spacingAndGlyphs">ab</text><path d="M18.500 8.500l1.500 6h-2.500z" fill="#888"/><circle cx="19.500" cy="18.500" r="3.800" fill="#4a3c3c" stroke="#5a4444" stroke-width="0.500"/></g>
<g transform="translate(843.0,96)"><path d="M1.5 9.25l4.500-4.75h15.5v9.5h-15.5z" fill="#54524a" stroke="#5e5c52" stroke-width="0.900"/><text x="6.5" y="12.25" font-size="9.500" font-weight="bold" fill="#2a2a2a" font-family="Liberation Sans, sans-serif" textLength="13" lengthAdjust="spacingAndGlyphs">abc</text><ellipse cx="18.500" cy="19.500" rx="4.500" ry="2.800" fill="#2a2a2a"/><circle cx="18.500" cy="19.500" r="1.700" fill="#777"/></g>
<g transform="translate(877.0,96)"><path d="M1.5 9.25l4.500-4.75h15.5v9.5h-15.5z" fill="#54524a" stroke="#5e5c52" stroke-width="0.900"/><text x="6.5" y="12.25" font-size="9.500" font-weight="bold" fill="#2a2a2a" font-family="Liberation Sans, sans-serif" textLength="13" lengthAdjust="spacingAndGlyphs">abc</text><rect x="13" y="13" width="11" height="11" rx="1.200" fill="#444"/><path d="M14.500 17h4v-2.500l4.500 4-4.500 4v-2.500h-4z" fill="#757575"/></g>
<g transform="translate(911.0,96)"><path d="M1.5 9.25l4.500-4.75h15.5v9.5h-15.5z" fill="#54524a" stroke="#5e5c52" stroke-width="0.900"/><text x="6.5" y="12.25" font-size="9.500" font-weight="bold" fill="#2a2a2a" font-family="Liberation Sans, sans-serif" textLength="13" lengthAdjust="spacingAndGlyphs">abc</text><rect x="13" y="13" width="11" height="11" rx="1.200" fill="#444"/><path d="M18.300 16a2.800 2.800 0 1 1-2.800 2.800" fill="none" stroke="#777" stroke-width="1.300"/><path d="M13.600 18.300l1.900 2.600 1.900-2.600z" fill="#777"/></g>
<g transform="translate(945.0,96)"><path d="M1.5 9.25l4.500-4.75h15.5v9.5h-15.5z" fill="#54524a" stroke="#5e5c52" stroke-width="0.900"/><text x="6.5" y="12.25" font-size="9.500" font-weight="bold" fill="#2a2a2a" font-family="Liberation Sans, sans-serif" textLength="13" lengthAdjust="spacingAndGlyphs">abc</text><rect x="13" y="13" width="11" height="11" rx="1.200" fill="#4e4a40"/><path d="M14.500 22.500l7-7" stroke="#7a7a7a" stroke-width="2.200"/></g>
<rect x="982" y="103.0" width="2" height="11.500" fill="#5a5a5a"/>
<g transform="translate(989.5,96)"><ellipse cx="11.800" cy="10.500" rx="11.600" ry="10.500" fill="#b0ccf0"/><path d="M11.800 0v21M.3 10.500h23M2.500 4.500q9.300 4 18.600 0M2.500 16.500q9.300-4 18.600 0M11.800 0q-8 10.500 0 21M11.800 0q8 10.500 0 21" fill="none" stroke="#f4f8ff" stroke-width="0.900"/><path d="M3 6l4.500-.5.500 4-3.500 1zM9 5l5 0 .500 4.500-5 .5zM15.500 5.500l4.500.5 1 4.500-4.500-.5zM5 12.500l3 0 .5 3-2.500 0z" fill="#2a4c88"/><path d="M7.500 15.500l3-2.500h2l1 2.500 1-2.500h2l3.500 3 2.500 4.500a3.500 3.200 0 0 1-6.800 1h-2.400a3.500 3.200 0 0 1-6.800-1z" fill="#050505"/><ellipse cx="7.800" cy="20.800" rx="3.200" ry="2.300" fill="#1c2c48" stroke="#000" stroke-width="1.600"/><ellipse cx="18.800" cy="20.800" rx="3.200" ry="2.300" fill="#1c2c48" stroke="#000" stroke-width="1.600"/></g>
<rect x="1024.5" y="103.0" width="2" height="11.500" fill="#5a5a5a"/>
<g transform="translate(1032.0,96)"><g transform="translate(1.2,1.2) scale(.9)"><path d="M11.500 1.500c-4 0-4.500 1.700-4.500 3v2.500h5v1h-7.500c-2 0-3 1.800-3 4.500s1 4.500 3 4.500h2v-3c0-1.800 1.500-3 3-3h5c1.500 0 2.500-1 2.500-2.500v-4c0-1.500-1.500-3-5.500-3z" fill="#3d7ab8"/><circle cx="9" cy="4.200" r="1" fill="#fff"/><path d="M12.500 23c4 0 4.500-1.700 4.500-3v-2.500h-5v-1h7.500c2 0 3-1.800 3-4.500s-1-4.500-3-4.500h-2v3c0 1.800-1.500 3-3 3h-5c-1.500 0-2.500 1-2.500 2.500v4c0 1.500 1.500 3 5.500 3z" fill="#f4d040"/><circle cx="15" cy="20.300" r="1" fill="#fff"/><path d="M18.500 19l4.500 1.800-4.500 1.800" fill="none" stroke="#8a8a8a" stroke-width="0.900"/></g></g>
<g transform="translate(1066.0,96)"><g transform="translate(-.3,.8) scale(.93)"><path d="M12.700 22.500a10.300 10.300 0 1 0-9.600-13.200l4.900 1.200a5 5 0 1 1 4.700 6.700z" fill="#4e9ae4"/><path d="M.7 8.500l9.300 2-6.800 6.200z" fill="#4e9ae4"/><path d="M12.700 22.500a10.300 10.300 0 0 0 9.800-7" fill="none" stroke="#2a5fa8" stroke-width="0.800"/></g></g>
<path d="M1100.9 106.3h4.200v1.200l-1.300 2.400h-1.600l-1.300-2.400z" fill="#dadada"/>
<rect x="1118" y="103.0" width="2" height="11.500" fill="#5a5a5a"/>
<g transform="translate(1127.0,96)"><rect x="4.700" y="2" width="14.300" height="19" fill="#474b50"/><path d="M3.700 2v19" stroke="#3c3f43" stroke-width="0.800"/><text x="8.300" y="17.300" font-size="15" fill="#686868" font-family="Liberation Sans, sans-serif">?</text></g>
<rect x="1161" y="103.0" width="2" height="11.500" fill="#5a5a5a"/>
<g transform="translate(1168.0,96)"><rect x=".7" y="0" width="21" height="20.700" fill="#f4f8fc" stroke="#3a78c8" stroke-width="0.900"/><rect x="1.200" y=".5" width="20" height="2.200" fill="#f4d020"/><path d="M1.200 5h20M1.200 9h20M1.200 13h20M1.200 17h20M6 .5v20M11 .5v20M16 .5v20" stroke="#b4d0ec" stroke-width="0.800"/><path d="M8.500 12.500q.5-6.500 9-6.500v-3l6.500 5-6.500 5v-3q-5 0-5.500 2.500z" fill="#8ccc20" stroke="#5a9a10" stroke-width="0.500"/><path d="M24 13q-.5 6.500-9 6.500v3l-6.500-5 6.500-5v3q5 0 5.500-2.500z" fill="#8ccc20" stroke="#5a9a10" stroke-width="0.500"/></g>
<rect x="1" y="142.0" width="2" height="11.500" fill="#5a5a5a"/>
<g transform="translate(8.0,135)"><path d="M4 19q-1.500-9.500 3-13.200 4.500-3.300 13-2" fill="none" stroke="#575757" stroke-width="1.300" stroke-dasharray="2.200 1.800"/><rect x="2.300" y="19" width="3.500" height="3.500" fill="#575757"/><rect x="4.300" y="3.300" width="3.500" height="3.500" fill="#575757"/><rect x="18.300" y="2.300" width="3.500" height="3.500" fill="#575757"/></g>
<g transform="translate(42.0,135)"><path d="M.7 1.300v22h22.300z" fill="#5a5850"/><path d="M5 12v6.700h6.800z" fill="#323232"/><rect x="17" y="1.300" width="5.300" height="19.700" fill="#5a5850"/><path d="M19.500 4h3M20.500 6.500h2M19.500 9h3M20.500 11.500h2M19.500 14h3M20.500 16.500h2" stroke="#3c3c3c" stroke-width="0.800"/></g>
<g transform="translate(76.0,135)"><path d="M3 3l5.700 12 6-10h6.300" fill="none" stroke="#5e5e5e" stroke-width="1.800"/><rect x="1.300" y="1.300" width="3.500" height="3.500" fill="#5e5e5e"/><rect x="7" y="13.300" width="3.500" height="3.500" fill="#5e5e5e"/><rect x="13" y="3.300" width="3.500" height="3.500" fill="#5e5e5e"/><rect x="19.300" y="3.300" width="3.500" height="3.500" fill="#5e5e5e"/><rect x="13.200" y="13.900" width="9.800" height="9.800" rx="1.200" fill="#444"/><path d="M14.500 17.500h3.800v-2.300l4 3.600-4 3.600v-2.300h-3.800z" fill="#757575"/></g>
<path d="M110.9 145.3h4.200v1.200l-1.300 2.400h-1.600l-1.300-2.400z" fill="#dadada"/>
<g transform="translate(127.0,135)"><path transform="translate(-1.200,0)" d="M2 7.500c0-5 6-5.500 9.500-4.500 2.500.7 4-1 7-1 4 0 5 4 4 6.500-1 2.500-4 2.500-7 2-3-.5-5 2-8 1.500s-5.500-1.500-5.500-4.500z" fill="#575757"/><rect x="13.200" y="13.900" width="9.800" height="9.800" rx="1.200" fill="#444"/><path d="M18.300 16a2.800 2.800 0 1 1-2.800 2.800" fill="none" stroke="#777" stroke-width="1.300"/><path d="M13.600 18.300l1.900 2.600 1.900-2.600z" fill="#777"/></g>
<g transform="translate(160.95,135)"><circle cx="7.300" cy="8" r="6.700" fill="#575757"/><path d="M10.500 10l7.500-.5 4 6.500-3.500 7h-8l-3.500-7z" fill="#575757"/><path d="M7 7.500l7 8" stroke="#333" stroke-width="0.900"/><path d="M15 16.500l-3-.8 2-2z" fill="#333"/></g>
<g transform="translate(194.89999999999998,135)"><path d="M13 3.500c3-2 8-1.500 8.500 2.500s-1.500 6-4.500 6-3-1.500-5-1" fill="#575757"/><ellipse cx="7.300" cy="6.900" rx="6.300" ry="4.600" fill="none" stroke="#575757" stroke-width="1.400" transform="rotate(-8 7.300 6.900)"/><g opacity="1"><rect x="12.6" y="13.8" width="10" height="10" rx="1.8" fill="#4a463c"/><line x1="14.48" y1="17.00" x2="20.72" y2="20.60" stroke="#727272" stroke-width="1.1"/><line x1="20.72" y1="17.00" x2="14.48" y2="20.60" stroke="#727272" stroke-width="1.1"/><line x1="17.6" y1="15.20" x2="17.6" y2="22.40" stroke="#727272" stroke-width="1.3"/><circle cx="17.6" cy="18.8" r="1.1" fill="#4a463c"/></g></g>
<g transform="translate(228.84999999999997,135)"><path transform="translate(-1.200,0)" d="M2 7.500c0-5 6-5.500 9.500-4.500 2.500.7 4-1 7-1 4 0 5 4 4 6.500-1 2.500-4 2.500-7 2-3-.5-5 2-8 1.500s-5.500-1.500-5.500-4.500z" fill="#575757"/><path d="M5 14.500l5-1.500-1 7.500-7 2z" fill="#575757"/><g opacity="1"><rect x="12.6" y="13.8" width="10" height="10" rx="1.8" fill="#4a463c"/><line x1="14.48" y1="17.00" x2="20.72" y2="20.60" stroke="#727272" stroke-width="1.1"/><line x1="20.72" y1="17.00" x2="14.48" y2="20.60" stroke="#727272" stroke-width="1.1"/><line x1="17.6" y1="15.20" x2="17.6" y2="22.40" stroke="#727272" stroke-width="1.3"/><circle cx="17.6" cy="18.8" r="1.1" fill="#4a463c"/></g></g>
<g transform="translate(262.79999999999995,135)"><path d="M13 3.500c3-2 8-1.500 8.500 2.500s-1.500 6-4.500 6-3-1.500-5-1" fill="#575757"/><ellipse cx="7.300" cy="6.900" rx="6.300" ry="4.600" fill="none" stroke="#575757" stroke-width="1.400" transform="rotate(-8 7.300 6.900)"/><ellipse cx="7.300" cy="6.900" rx="4.600" ry="3" fill="#666" transform="rotate(-8 7.300 6.900)"/><g opacity="1"><rect x="12.6" y="13.8" width="10" height="10" rx="1.8" fill="#4a463c"/><line x1="14.48" y1="17.00" x2="20.72" y2="20.60" stroke="#727272" stroke-width="1.1"/><line x1="20.72" y1="17.00" x2="14.48" y2="20.60" stroke="#727272" stroke-width="1.1"/><line x1="17.6" y1="15.20" x2="17.6" y2="22.40" stroke="#727272" stroke-width="1.3"/><circle cx="17.6" cy="18.8" r="1.1" fill="#4a463c"/></g></g>
<g transform="translate(296.74999999999994,135)"><path d="M13 3.500c3-2 8-1.500 8.500 2.500s-1.500 6-4.500 6-3-1.500-5-1" fill="#575757"/><ellipse cx="7.300" cy="6.900" rx="6.300" ry="4.600" fill="none" stroke="#575757" stroke-width="1.400" transform="rotate(-8 7.300 6.900)"/><rect x="13.200" y="13.900" width="9.800" height="9.800" rx="1.200" fill="#59564c"/><path d="M15.600 16.300l5 5M20.600 16.300l-5 5" stroke="#7e7e7e" stroke-width="1.700"/></g>
<g transform="translate(330.69999999999993,135)"><path transform="translate(-1.200,0)" d="M2 7.500c0-5 6-5.500 9.500-4.500 2.500.7 4-1 7-1 4 0 5 4 4 6.500-1 2.500-4 2.500-7 2-3-.5-5 2-8 1.500s-5.500-1.500-5.500-4.500z" fill="#575757"/><path d="M5 14.500l5-1.500-1 7.500-7 2z" fill="#575757"/><rect x="13.200" y="13.900" width="9.800" height="9.800" rx="1.200" fill="#59564c"/><path d="M15.600 16.300l5 5M20.600 16.300l-5 5" stroke="#7e7e7e" stroke-width="1.700"/></g>
<g transform="translate(364.6499999999999,135)"><path d="M2 8c0-5 5-6 9-5 2.500.7 4-1 7-1 4 0 5.500 3.500 4.500 6-1 2.500-4 3-7 2.500-2-.3-3 1-3.500 4-.5 3.500-1 7-3 7.500-2 .5-2.500-3-3-6-.5-3.500-4-4.500-4-8z" fill="#575757"/><path d="M4.500 11.500l4 2.500 4-2.500" fill="none" stroke="#5a4a44" stroke-width="0.700" stroke-dasharray="1.200 1"/></g>
<g transform="translate(398.5999999999999,135)"><path d="M4 21c-3-2-2-6 .5-8.500s4-5 7-8 8.500-3.500 10-.5-1 5.500-3 7.500-3 5-5.500 8-6.500 3-9 1.500z" fill="#575757" stroke="#5a564a" stroke-width="0.500"/><path d="M5.500 19c-1.800-1.500-1-4 1-6s4-5 6.500-7.500 6-2.500 7-.8-.8 4-2.500 5.800-3 5-5 7.500-5 2.500-7 1z" fill="none" stroke="#6a6456" stroke-width="0.700"/></g>
<g transform="translate(432.5499999999999,135)"><path d="M4 3l6 13.500 6.500-11h6" fill="none" stroke="#575757" stroke-width="1.400"/><rect x="2.500" y="1.500" width="3" height="3" fill="#575757"/><rect x="8.500" y="15" width="3" height="3" fill="#575757"/><rect x="15" y="4" width="3" height="3" fill="#575757"/><rect x="21" y="4" width="3" height="3" fill="#575757"/><circle cx="19" cy="18.500" r="5" fill="#3c3c3c" stroke="#4a4a4a" stroke-width="0.600"/><path d="M15.500 18a3.500 3.500 0 0 1 6-1.500M22.500 19a3.500 3.500 0 0 1-6 1.500" fill="none" stroke="#888" stroke-width="1.300"/></g>
<g transform="translate(466.4999999999999,135)"><path d="M10.500 1v22M1 12.500h23M17 7v17" stroke="#575757" stroke-width="1.300"/><path d="M10.500 1v22" stroke="#3a3a3a" stroke-width="0.600" stroke-dasharray="1 1"/><rect x="9" y="11" width="3" height="3" fill="#777"/><rect x="15.500" y="11" width="3" height="3" fill="#777"/><g opacity="1"><rect x="17.5" y="1.5" width="7" height="7" rx="1.8" fill="#55503c"/><line x1="18.82" y1="3.74" x2="23.18" y2="6.26" stroke="#8a8a8a" stroke-width="1.1"/><line x1="23.18" y1="3.74" x2="18.82" y2="6.26" stroke="#8a8a8a" stroke-width="1.1"/><line x1="21.0" y1="2.48" x2="21.0" y2="7.52" stroke="#8a8a8a" stroke-width="1.3"/><circle cx="21.0" cy="5.0" r="1.1" fill="#55503c"/></g><rect x="1" y="19" width="7" height="7" rx="1" fill="#666258"/><path d="M2.500 20.500l4 4M6.500 20.500l-4 4" stroke="#484848" stroke-width="1.300"/></g>
<g transform="translate(500.44999999999993,135)"><ellipse cx="6.500" cy="8.500" rx="5.500" ry="5.800" fill="#575757"/><ellipse cx="19" cy="8.500" rx="5.500" ry="5.800" fill="#575757"/><path d="M10.500 1.500l4.500 15M16.500 1.500l-6 15.500" stroke="#787878" stroke-width="1.100"/><ellipse cx="8.500" cy="20.500" rx="2" ry="3.200" fill="none" stroke="#5a4840" stroke-width="0.800" transform="rotate(25 8.500 20.500)"/><ellipse cx="16.500" cy="20" rx="2" ry="3.200" fill="none" stroke="#5a4840" stroke-width="0.800" transform="rotate(-25 16.500 20)"/></g>
<g transform="translate(534.4,135)"><ellipse cx="6.500" cy="8.500" rx="5.500" ry="5.800" fill="#575757"/><ellipse cx="19" cy="8.500" rx="5.500" ry="5.800" fill="#575757"/><path d="M10.500 1.500l4.500 15M16.500 1.500l-6 15.500" stroke="#787878" stroke-width="1.100"/><ellipse cx="8.500" cy="20.500" rx="2" ry="3.200" fill="none" stroke="#5a4840" stroke-width="0.800" transform="rotate(25 8.500 20.500)"/><ellipse cx="16.500" cy="20" rx="2" ry="3.200" fill="none" stroke="#5a4840" stroke-width="0.800" transform="rotate(-25 16.500 20)"/></g>
<g transform="translate(568.35,135)"><path d="M11 3.500q-9-3-9 5t9 5l-2-1.200 2-.8-2-1.200 2-.8-2-1.200 2-.8-2-1.200 2-.8-2-1.200z" fill="#575757"/><path d="M14 4q5-1.500 8 1.500t0 7-8 1l2.500-.8-2.500-1.200 2.500-.8-2.500-1.200 2.500-.8-2.500-1.200 2.500-.8-2.500-1.200 2.500-.8z" fill="#575757"/></g>
<g transform="translate(602.3000000000001,135)"><rect x="1.5" y="2.5" width="9.500" height="6" fill="#707070"/><rect x="2.5" y="3.8" width="7.500" height="3.400" fill="#5c5c5c"/><path d="M5.5 6.5l3-2.500" stroke="#3c3c3c" stroke-width="0.900"/><rect x="1.5" y="9.7" width="9.500" height="6" fill="#707070"/><rect x="2.5" y="11.0" width="7.500" height="3.400" fill="#5c5c5c"/><path d="M5.5 13.7l3-2.500" stroke="#3c3c3c" stroke-width="0.900"/><rect x="1.5" y="16.9" width="9.500" height="6" fill="#707070"/><rect x="2.5" y="18.2" width="7.500" height="3.400" fill="#5c5c5c"/><path d="M5.5 20.9l3-2.500" stroke="#3c3c3c" stroke-width="0.900"/><rect x="13" y="2.5" width="9.500" height="6" fill="#707070"/><rect x="14" y="3.8" width="7.500" height="3.400" fill="#5c5c5c"/><path d="M17 6.5l3-2.500" stroke="#3c3c3c" stroke-width="0.900"/><rect x="13" y="9.7" width="9.500" height="6" fill="#707070"/><rect x="14" y="11.0" width="7.500" height="3.400" fill="#5c5c5c"/><path d="M17 13.7l3-2.500" stroke="#3c3c3c" stroke-width="0.900"/><rect x="13" y="16.9" width="9.500" height="6" fill="#707070"/><rect x="14" y="18.2" width="7.500" height="3.400" fill="#5c5c5c"/><path d="M17 20.9l3-2.500" stroke="#3c3c3c" stroke-width="0.900"/></g>
<g transform="translate(636.2500000000001,135)"><path d="M10 3.500l8 4.300-8 4.300z" fill="#575757"/><path d="M10 14l5.500 9.500h-11z" fill="none" stroke="#575757" stroke-width="1"/></g>
<path d="M670.9 145.3h4.200v1.200l-1.300 2.400h-1.600l-1.300-2.400z" fill="#dadada"/>
<rect x="1" y="180.7" width="2" height="11.500" fill="#5a5a5a"/>
<g transform="translate(8.0,173)"><rect x="1.500" y="2.200" width="21.300" height="19" fill="#e4e6e8" stroke="#2a2a2a" stroke-width="0.700" stroke-dasharray="1.200 1.200"/><rect x="2.200" y="3.200" width="13.600" height="13.300" fill="#f6e04a" stroke="#c9a10a" stroke-width="0.800"/><path d="M10 9.200l12.500 9-4.700.4 2.900 4.800-2.300 1.300-2.900-4.900-3.400 3.100z" fill="#fff" stroke="#222" stroke-width="0.600"/></g>
<path d="M42.3 183.7h5.400v1l-1.700 3.700h-2l-1.700-3.700z" fill="#9c9c9c"/>
<g transform="translate(59.0,173)"><rect x="7" y="9" width="14" height="14" fill="#f6e04a" stroke="#c9a10a" stroke-width="0.800"/><path d="M12 4.500q-2-2.500-5.500-1.700t-3.500 3.700 4.500 3.300q-5.500.4-5.500 3.900t4.500 3.600q3.500 0 5.500-2.800" fill="none" stroke="#8030a0" stroke-width="1"/></g>
<path d="M92.3 183.7h5.400v1l-1.700 3.700h-2l-1.700-3.700z" fill="#9c9c9c"/>
<g transform="translate(108.5,173)"><rect x="1.500" y="3" width="14" height="13.500" fill="#f6e04a" stroke="#c9a10a" stroke-width="0.800"/><rect x="5.500" y="7" width="14" height="13.400" fill="#f6e04a" stroke="#c9a10a" stroke-width="0.800"/><rect x="12.500" y="13.800" width="11.300" height="11" rx="2" fill="#d01818"/><circle cx="18.150" cy="19.300" r="3.600" fill="none" stroke="#fff" stroke-width="1.300"/><path d="M15.700 21.800l5-5" stroke="#fff" stroke-width="1.300"/></g>
<path d="M142.3 183.7h5.400v1l-1.700 3.700h-2l-1.700-3.700z" fill="#9c9c9c"/>
<path d="M312.400 160.800v18.300l8 2.800 4.300-8.200z" fill="#4c4c4c" stroke="#f8f8f8" stroke-width="1.300" stroke-linejoin="round"/>
<polygon points="467.2,503.5 528.1,487.4 554.1,517.8 496.3,529.9 474.8,515.6" fill="#e5704a"/>
<circle cx="655.8" cy="448.8" r="6.500" fill="#1f5a9e"/>
<circle cx="690.8" cy="456.9" r="6.500" fill="#1f5a9e"/>
<circle cx="1263.5" cy="489.6" r="6.600" fill="#7e3a4a"/>
<polyline points="727.9,525.8 829.8,574.4 741.9,560.3" fill="none" stroke="#4e8636" stroke-width="3.700" stroke-linejoin="bevel"/>
<line x1="682.2" y1="704.2" x2="753.5" y2="743.2" stroke="#4e8636" stroke-width="3.700"/>
<rect x="417.5" y="210.5" width="8" height="8.500" rx="1.500" fill="none" stroke="#6e6e6e" stroke-width="0.900"/><path d="M419.0 212.0l5 5.500M424.0 212.0l-5 5.500" stroke="#484848" stroke-width="1.200"/>
<rect x="1575.5" y="210.5" width="8" height="8.500" rx="1.500" fill="none" stroke="#6e6e6e" stroke-width="0.900"/><path d="M1577.0 212.0l5 5.500M1582.0 212.0l-5 5.500" stroke="#484848" stroke-width="1.200"/>
<rect x="1575.5" y="462.5" width="8" height="8.500" rx="1.500" fill="none" stroke="#6e6e6e" stroke-width="0.900"/><path d="M1577.0 464.0l5 5.500M1582.0 464.0l-5 5.500" stroke="#484848" stroke-width="1.200"/>
<g transform="translate(4.0,233)"><path d="M.5 9l4-6 8 3.500-2.500 6.500-5 1.500z" fill="#e8c81c"/><path d="M2.500 6l2.500-3 4 1.700-2 3.300z" fill="#5a90d0"/><path d="M.5 9l5 2.500 1.500 3-2 .5-5-3z" fill="#d82818"/><path d="M10 7.500l5-5.500" stroke="#e89820" stroke-width="1.500"/><path d="M6.500 9.500l4-2.500 1.500 2-1.500 4.500-2.500.5z" fill="#e8a850"/></g>
<g transform="translate(30.0,233)"><path d="M1.500 5v9.500h7" fill="none" stroke="#aaa" stroke-width="1"/><rect x="4" y="2.500" width="9" height="10" fill="#d8d8d8" stroke="#999" stroke-width="0.600"/><path d="M7 1v8q0 1.500 1.500 1.500t1.500-1.500v-8" fill="none" stroke="#2a5fa8" stroke-width="1.200"/><rect x="9.500" y="9.500" width="6.500" height="6.500" rx="1" fill="#4a9a58"/><path d="M12.750 10.500v4.500M10.500 12.750h4.500" stroke="#fff" stroke-width="1.300"/></g>
<g transform="translate(56.0,233)"><path d="M.5 8q7.500-8 14 0-6.500 7-14 0z" fill="#f0f0f0" stroke="#999" stroke-width="0.600"/><circle cx="7.500" cy="7.800" r="3.200" fill="#5b8fd0"/><circle cx="7.500" cy="7.800" r="1.400" fill="#1c3c74"/><path d="M1 5q6.500-5.500 13 0" fill="none" stroke="#ccc" stroke-width="0.800"/><path d="M10.500 11.500h5.500l-2.750 3.500z" fill="#8a8a8a"/></g>
<g transform="translate(83.0,233)"><path d="M1.500 3h12l-4.500 6v6.500l-3-1.500v-5z" fill="#5b8fd0" stroke="#3a6ab0" stroke-width="0.500"/><rect x="1.500" y="1" width="12" height="2" fill="#f0d030"/><path d="M10.500 11.500h5.500l-2.750 3.500z" fill="#8a8a8a"/></g>
<g transform="translate(109.0,233)"><path d="M6.500 2.500q-1.500-1.800-3.500-1t-2 2.500 2.800 2.300q-3.500.4-3.500 2.700t2.800 2.300" fill="none" stroke="#4a4a4a" stroke-width="1"/><rect x="7" y="8.500" width="8" height="7" fill="#5a5a5a"/></g>
<g transform="translate(150.0,233)"><path d="M.5 2h13M2.500 2v11.500M2.500 6.500h3M2.500 12h3" fill="none" stroke="#c4c4c4" stroke-width="0.900"/><rect x="4.300" y="4.700" width="3.400" height="3.400" fill="#f4a41c"/><rect x="4.300" y="10.300" width="3.400" height="3.400" fill="#f4a41c"/><path d="M8.800 1h3.400v8h2.800l-4.500 5.500-4.500-5.500h2.800z" fill="#5b8fd0"/></g>
<g transform="translate(176.0,233)"><path d="M.5 2h13M2.500 2v11.500M2.500 6.500h3M2.500 12h3" fill="none" stroke="#c4c4c4" stroke-width="0.900"/><rect x="4.300" y="4.700" width="3.400" height="3.400" fill="#f4a41c"/><rect x="4.300" y="10.300" width="3.400" height="3.400" fill="#f4a41c"/><path d="M8.800 14.500h3.400v-8.500h2.800l-4.500-5.500-4.500 5.500h2.800z" fill="#5b8fd0"/></g>
<g transform="translate(201.0,233)"><rect x="2.300" y="1.200" width="11.500" height="11.500" fill="#f0f0ee" stroke="#bbb" stroke-width="0.600"/><rect x="10" y="9.900" width="6" height="5.200" rx="1.200" fill="#e02838"/><path d="M11.200 12.500h3.800" stroke="#fff" stroke-width="1.300"/></g>
<path d="M134.9 238.8h4.200v1.200l-1.300 2.400h-1.600l-1.300-2.400z" fill="#dadada"/>
<path d="M23.7 272.8q8.300-10 16.600 0-8.300 10-16.600 0z" fill="none" stroke="#f4f4f4" stroke-width="1.500"/><circle cx="31.8" cy="272.8" r="3.700" fill="#f4f4f4"/><circle cx="30.7" cy="271.2" r="1.500" fill="#181818"/>
<path d="M23.7 300.8q8.300-10 16.600 0-8.300 10-16.600 0z" fill="none" stroke="#f4f4f4" stroke-width="1.500"/><circle cx="31.8" cy="300.8" r="3.700" fill="#f4f4f4"/><circle cx="30.7" cy="299.2" r="1.500" fill="#181818"/>
<path d="M23.7 328.8q8.300-10 16.600 0-8.300 10-16.600 0z" fill="none" stroke="#f4f4f4" stroke-width="1.500"/><circle cx="31.8" cy="328.8" r="3.700" fill="#f4f4f4"/><circle cx="30.7" cy="327.2" r="1.500" fill="#181818"/>
<path d="M23.7 356.8q8.300-10 16.600 0-8.300 10-16.600 0z" fill="none" stroke="#f4f4f4" stroke-width="1.500"/><circle cx="31.8" cy="356.8" r="3.700" fill="#f4f4f4"/><circle cx="30.7" cy="355.2" r="1.500" fill="#181818"/>
<path d="M23.7 384.8q8.300-10 16.600 0-8.300 10-16.600 0z" fill="none" stroke="#f4f4f4" stroke-width="1.500"/><circle cx="31.8" cy="384.8" r="3.700" fill="#f4f4f4"/><circle cx="30.7" cy="383.2" r="1.500" fill="#181818"/>
<rect x="47" y="265.500" width="16.500" height="16.500" fill="#e5704a"/>
<circle cx="55.500" cy="300.800" r="5.600" fill="#1f5a9e"/>
<circle cx="55.500" cy="328.800" r="5.600" fill="#8c3a4c"/>
<rect x="47" y="355.500" width="15" height="3" fill="#4f8a35"/>
<rect x="49" y="379" width="14" height="14" fill="#1a2a42"/><rect x="53.67" y="379" width="4.670" height="4.670" fill="#c8d8f0"/><rect x="49" y="383.67" width="4.670" height="4.670" fill="#8aa8d8"/><rect x="58.33" y="383.67" width="4.670" height="4.670" fill="#c8d8f0"/><rect x="53.67" y="388.33" width="4.670" height="4.670" fill="#a8c0e8"/><rect x="49" y="379" width="4.670" height="4.670" fill="#24385c"/><rect x="58.33" y="388.33" width="4.670" height="4.670" fill="#1a2a42"/><rect x="58.33" y="379" width="4.670" height="4.670" fill="#24385c"/><rect x="49" y="388.33" width="4.670" height="4.670" fill="#24385c"/>
<path d="M6.200 381.900l6.500 3.600-6.500 3.600z" fill="#6c6c6c"/>
<rect x="24" y="405" width="15" height="16" rx="1" fill="#e4e4e4"/><path d="M26 409h3M31 409h6M26 412.500h3M31 412.500h6M26 416h3M31 416h6M26 419h3M31 419h6" stroke="#777" stroke-width="1.100"/><rect x="25" y="406" width="13" height="1.600" fill="#999"/>
<path d="M402.500 415v-5.500h13.500" fill="none" stroke="#444" stroke-width="1.300"/>
<g transform="translate(1288.0,233)"><rect x="1.500" y="1.500" width="11.500" height="11.500" fill="#f4f4f4" stroke="#bbb" stroke-width="0.600"/><rect x="9.500" y="9.500" width="6" height="6" rx="1" fill="#4a9a58"/><path d="M12.500 10.500v4M10.500 12.500h4" stroke="#fff" stroke-width="1.100"/></g>
<g transform="translate(1314.0,233)"><path d="M1 7.500A7 7 0 0 1 12.500 3l2.200-2.200v6.700h-6.700l2.300-2.300a3.800 3.800 0 0 0-5.800 2.300z" fill="#4a8cd8" stroke="#2a60a8" stroke-width="0.400"/><path d="M15 8.500a7 7 0 0 1-11.500 4.500l-2.200 2.200v-6.700h6.700l-2.300 2.300a3.800 3.800 0 0 0 5.800-2.300z" fill="#4a8cd8" stroke="#2a60a8" stroke-width="0.400"/></g>
<g transform="translate(1340.0,233)"><path d="M1.500 3.500h13l-5 6v6l-3-1.500v-4.500z" fill="#5b8fd0" stroke="#3a6ab0" stroke-width="0.500"/><rect x="1.500" y="1.500" width="13" height="2" fill="#f0d030"/></g>
<g transform="translate(1366.0,233)"><path d="M.5 2h13M2.500 2v11.500M2.500 6.500h3M2.500 12h3" fill="none" stroke="#c4c4c4" stroke-width="0.900"/><rect x="4.300" y="4.700" width="3.400" height="3.400" fill="#f4a41c"/><rect x="4.300" y="10.300" width="3.400" height="3.400" fill="#f4a41c"/><path d="M8.800 14.500h3.400v-8.500h2.800l-4.500-5.500-4.500 5.500h2.800z" fill="#5b8fd0"/></g>
<g transform="translate(1392.0,233)"><circle cx="8" cy="8" r="6.500" fill="#5b8fd0" stroke="#8ab0e0" stroke-width="0.700"/><text x="6" y="12" font-size="10.500" font-style="italic" font-weight="bold" fill="#fff" font-family="Liberation Serif, serif">i</text></g>
<path d="M1286.600 487q1.500-1.200 4-.8 2 .6 3.800 1.800 2-1.200 4-1.800 2.500-.4 4 .8v8.500q-2.500-1.500-5-.8l-3 1.200-3-1.200q-2-.7-3.500.3l-1.300 2.500z" fill="#e2e2e2"/>
<path d="M1576.9 490.3h4.200v1.200l-1.300 2.400h-1.600l-1.300-2.400z" fill="#c8c8c8"/>
<path d="M1544.4 520.8h4.200v1.200l-1.300 2.400h-1.600l-1.300-2.400z" fill="#c8c8c8"/>
<path d="M1579 519.300q-1.500-2.300-4.500-1.700t-3 2.800 3.300 2.400q-4 .3-4 2.900t3.500 2.800 4.700-1.800" fill="none" stroke="#6a2a7c" stroke-width="1"/>
<g transform="translate(1506.0,793)"><path d="M5.500 1.500h6l3 3v8.500h-9z" fill="#bbb"/><path d="M2 4.500h6l3 3v8h-9z" fill="#eee"/><path d="M3.500 9h5M3.500 11h6M3.500 13h5" stroke="#888" stroke-width="0.800"/></g>
<g transform="translate(1535.0,793)"><path d="M1 7.500A7 7 0 0 1 12.500 3l2.200-2.200v6.700h-6.700l2.300-2.300a3.800 3.800 0 0 0-5.800 2.300z" fill="#4a8cd8" stroke="#2a60a8" stroke-width="0.400"/><path d="M15 8.500a7 7 0 0 1-11.500 4.500l-2.200 2.200v-6.700h6.700l-2.300 2.300a3.800 3.800 0 0 0 5.800-2.300z" fill="#4a8cd8" stroke="#2a60a8" stroke-width="0.400"/></g>
<path d="M1574 804h8l-4 4z" fill="#7a7a7a"/>
<circle cx="15" cy="830" r="4.500" fill="none" stroke="#969a8a" stroke-width="1.200" stroke-dasharray="1.500 1"/><path d="M18.500 833.500l4 4" stroke="#969a8a" stroke-width="1.200"/>
<g transform="translate(874.300,832.300) rotate(-38)"><rect x="-5.500" y="-9.300" width="11" height="18.600" rx="5" fill="#f4f4f4" stroke="#111" stroke-width="0.900"/><path d="M-2.200 -8.500v8.500M1.800 -8.500v8.500" stroke="#111" stroke-width="1.700"/><circle cx="0" cy="4.600" r="3" fill="#fff" stroke="#111" stroke-width="1.300"/><circle cx="0" cy="4.600" r="1" fill="#111"/><path d="M-8 -2.500l1.500 0M7 -9l1.500-1" stroke="#111" stroke-width="0.900"/></g>
<path d="M1029.9 829.3h4.200v1.200l-1.300 2.400h-1.600l-1.300-2.400z" fill="#c8c8c8"/>
<g transform="translate(1053,824)"><path d="M3.500 8v-3.500a4 4 0 0 1 8 0v3.500" fill="none" stroke="#dcdcdc" stroke-width="2"/><rect x="1" y="8" width="13" height="9.500" rx="1.500" fill="#6e6e6e"/></g>
<path d="M1213 827.0h6l-3-4.500z" fill="#b4b4b4"/><path d="M1213 835.0h6l-3 4.500z" fill="#b4b4b4"/>
<path d="M1367 827.0h6l-3-4.500z" fill="#b4b4b4"/><path d="M1367 835.0h6l-3 4.500z" fill="#b4b4b4"/>
<g transform="translate(1459.300,824.500)"><path d="M0 7.700l3-5 5.300-2.700 5.300 2.700 3 5-3 5-5.300 2.700-5.300-2.700z" fill="#8a8a8a" stroke="#e4e4e4" stroke-width="1"/><path d="M0 7.700h16.600M8.300 0v15.400M2.500 3.500q5.800 2.500 11.600 0M2.500 11.900q5.800-2.500 11.600 0M8.300 0q-5.500 7.700 0 15.400M8.300 0q5.500 7.700 0 15.400" fill="none" stroke="#f0f0f0" stroke-width="1"/></g>
<g transform="translate(1555.500,824)"><path d="M9 1q8.700 0 8.700 6.500 0 4.500-4.500 5.800l3.500 3.700q-5.500-.3-7-3-9.200 0-9.200-6.500t8.500-6.500z" fill="#707070"/><circle cx="5" cy="7.700" r="1.300" fill="#fff"/><circle cx="9" cy="7.700" r="1.300" fill="#fff"/><circle cx="13" cy="7.700" r="1.300" fill="#fff"/></g>
<g><circle cx="10.700" cy="9.700" r="7.200" fill="none" stroke="#6aae28" stroke-width="4.400"/><path d="M11.500 11l8.500 7.500" stroke="#5aa428" stroke-width="4.200"/><path d="M8.600 7.900l7.200 4.600-3.400 3.400z" fill="#f0901c"/><path d="M12 11.500l3.500 1.700-2.300 2.400z" fill="#d8e040"/><path d="M15 13.500l4.500 4" stroke="#c8d8c0" stroke-width="0.700"/></g>
<path d="M30.300 14.700l4.500-4.500" stroke="#9aa2aa" stroke-width="1.300"/><path d="M31.200 8.300l6 5.600" stroke="#9aa2aa" stroke-width="1.300"/><path d="M33.300 10l4.600-5.600 3.200 2.800-4.600 5.600z" fill="#98a4b0" opacity="0.800"/>
<path d="M1520.300 7.600l5.600 5.200 5.600-5.200" fill="none" stroke="#c4c8cc" stroke-width="1.100"/><path d="M1544.400 12.200l5.500-5.100 5.600 5.100" fill="none" stroke="#c4c8cc" stroke-width="1.100"/><circle cx="1574" cy="10.100" r="9" fill="#a2a6aa"/><path d="M1570 6.100l8 8M1578 6.100l-8 8" stroke="#2c3136" stroke-width="1.200"/></svg>
</body></html>
